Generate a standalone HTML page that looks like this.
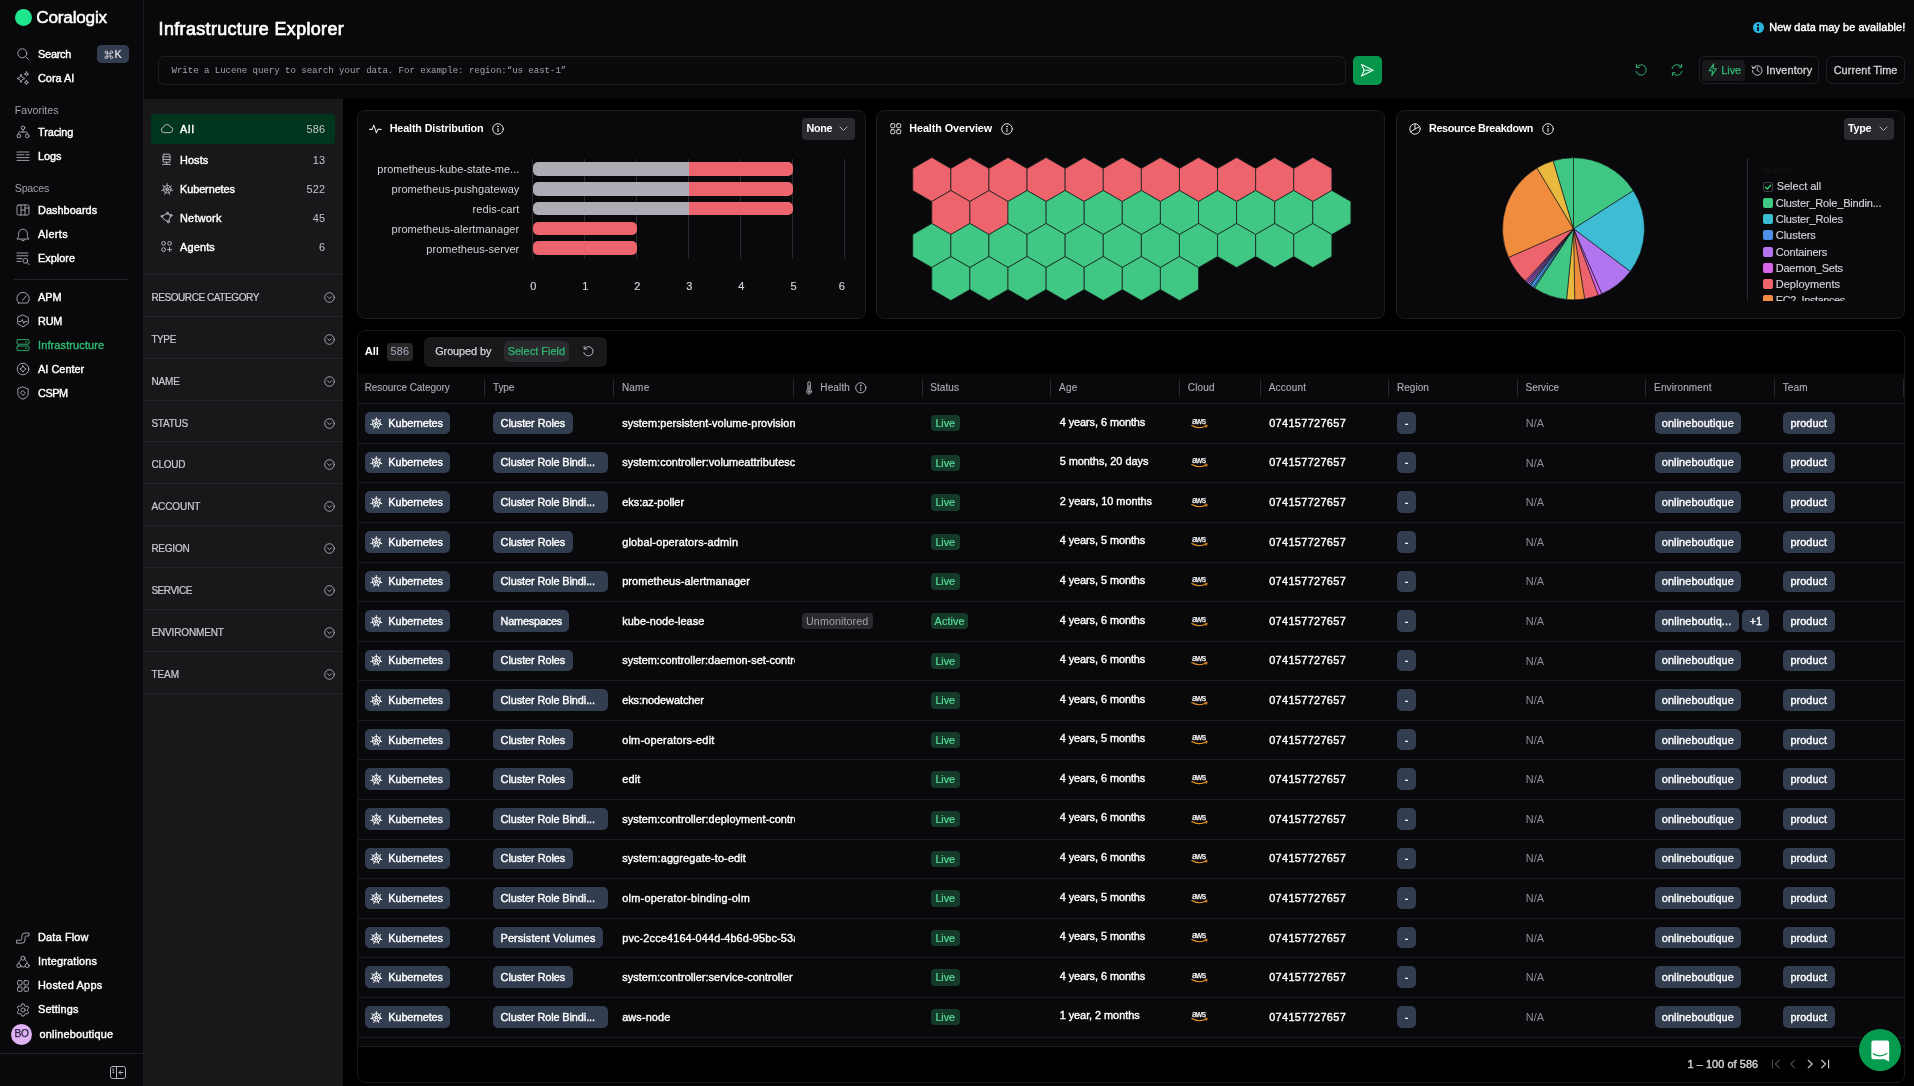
<!DOCTYPE html><html><head><meta charset="utf-8"><title>Infrastructure Explorer</title><style>*{box-sizing:border-box;margin:0;padding:0}
html,body{width:1914px;height:1086px;overflow:hidden;background:#000}
body{font-family:"Liberation Sans",sans-serif;color:#fff;font-size:12px;position:relative}
.a{position:absolute}.n{white-space:nowrap}
svg{display:block;overflow:visible}
#app{position:absolute;left:0;top:0;width:1914px;height:1086px;overflow:hidden;will-change:transform;background:#000}</style></head><body><div id="app">
<div class="a" style="left:144px;top:0px;width:1770px;height:98.8px;background:#09090b;"></div><div class="a n" style="top:15.7px;line-height:26px;font-size:17.9px;letter-spacing:0.37px;color:#fff;left:158.6px;-webkit-text-stroke:0.7px #fff;">Infrastructure Explorer</div><div class="a" style="left:158px;top:55.5px;width:1187.6px;height:29.5px;background:#0a0a0c;border-radius:6px;border:1px solid #1d1d20;"></div><div class="a n" style="top:60.7px;line-height:20px;font-size:9.1px;letter-spacing:-0.05px;color:#a1a1aa;left:171.5px;font-family:'Liberation Mono',monospace;">Write a Lucene query to search your data. For example: region:“us east-1”</div><div class="a" style="left:1352.6px;top:55.9px;width:29.2px;height:28.7px;background:#05964b;border-radius:5px;"></div><svg class="a" viewBox="0 0 14 14" style="left:1360px;top:63.2px;width:14.6px;height:14.6px;stroke:#f0fff6;fill:none;stroke-width:1.05;stroke-linecap:round;stroke-linejoin:round;"><path d="M1.5 1.5L12.5 7L1.5 12.5L4 7Z"/><path d="M4 7H9.5"/></svg><div class="a" style="left:1752.5px;top:22px;width:11px;height:11px;background:#2cb5dc;border-radius:6px;"></div><div class="a" style="left:1757.4px;top:24.3px;width:1.3px;height:1.5px;background:#06222b;"></div><div class="a" style="left:1757.4px;top:26.6px;width:1.3px;height:4.2px;background:#06222b;"></div><div class="a n" style="top:17.4px;line-height:20px;font-size:10.9px;letter-spacing:0.09px;color:#fff;left:1769.2px;-webkit-text-stroke:0.42px #fff;">New data may be available!</div><svg class="a" viewBox="0 0 14 14" style="left:1634px;top:63px;width:14px;height:14px;stroke:#2fb872;fill:none;stroke-width:0.95;stroke-linecap:round;stroke-linejoin:round;"><path d="M2.6 4.2A5.2 5.2 0 1 1 2 8.4"/><path d="M2.4 1.4V4.4H5.4"/></svg><svg class="a" viewBox="0 0 14 14" style="left:1670px;top:63px;width:14px;height:14px;stroke:#2fb872;fill:none;stroke-width:0.95;stroke-linecap:round;stroke-linejoin:round;"><path d="M2 5.6A5.2 5.2 0 0 1 11.4 4"/><path d="M11.6 1.4V4.2H8.8"/><path d="M12 8.4A5.2 5.2 0 0 1 2.6 10"/><path d="M2.4 12.6V9.8H5.2"/></svg><div class="a" style="left:1699px;top:56.3px;width:119.5px;height:27.6px;border-radius:6px;border:1px solid #1f1f23;"></div><div class="a" style="left:1701.7px;top:59.6px;width:43px;height:21.2px;background:#18181b;border-radius:4px;"></div><svg class="a" viewBox="0 0 10 14" style="left:1708px;top:63.4px;width:9.5px;height:13.5px;stroke:#2fb872;fill:none;stroke-width:1.1;stroke-linecap:round;stroke-linejoin:round;"><path d="M6 0.8L1.2 8H4.8L4 13.2L8.8 6H5.2Z"/></svg><div class="a n" style="top:60.1px;line-height:20px;font-size:10.9px;letter-spacing:0px;color:#2fb872;left:1721.2px;-webkit-text-stroke:0.25px #2fb872;">Live</div><svg class="a" viewBox="0 0 14 14" style="left:1750.5px;top:63.8px;width:12.5px;height:12.5px;stroke:#c9c9cf;fill:none;stroke-width:1.1;stroke-linecap:round;stroke-linejoin:round;"><path d="M2.2 4.8A5.4 5.4 0 1 1 1.6 7.4"/><path d="M1 2.4L2.2 5L4.8 4.2"/><path d="M7 4V7.2L9.2 8.6"/></svg><div class="a n" style="top:60.1px;line-height:20px;font-size:10.9px;letter-spacing:0.15px;color:#d4d4d8;left:1766.3px;-webkit-text-stroke:0.3px #d4d4d8;">Inventory</div><div class="a" style="left:1825.8px;top:56.3px;width:79.7px;height:27.6px;border-radius:6px;border:1px solid #1f1f23;"></div><div class="a n" style="top:60.1px;line-height:20px;font-size:10.9px;letter-spacing:0.07px;color:#d4d4d8;left:1833.7px;-webkit-text-stroke:0.3px #d4d4d8;">Current Time</div>
<div class="a" style="left:0px;top:0px;width:143.5px;height:1086px;background:#09090b;"></div><div class="a" style="left:143px;top:0px;width:1px;height:1086px;background:#1a1a1e;"></div><div class="a" style="left:15px;top:9px;width:17px;height:17px;background:#1fe68d;border-radius:9px;"></div><div class="a n" style="top:5.1px;line-height:24px;font-size:17.2px;letter-spacing:-0.22px;color:#fff;left:36.3px;-webkit-text-stroke:0.5px #fff;">Coralogix</div><svg class="a" viewBox="0 0 14 14" style="left:15.5px;top:47px;width:14px;height:14px;stroke:#acacb4;fill:none;stroke-width:0.92;stroke-linecap:round;stroke-linejoin:round;"><circle cx="6.3" cy="6.3" r="4.5"/><path d="M9.6 9.6L12.4 12.4"/></svg><div class="a n" style="top:43.8px;line-height:20px;font-size:10.9px;letter-spacing:-0.22px;color:#fff;left:38px;-webkit-text-stroke:0.4px #fff;">Search</div><div class="a" style="left:97px;top:45px;width:32px;height:18px;background:#323d4f;border-radius:4.5px;"></div><svg class="a" viewBox="0 0 10 10" style="left:103.6px;top:49.8px;width:9.6px;height:9.6px;stroke:#e4e4e7;fill:none;stroke-width:0.8;stroke-linecap:round;stroke-linejoin:round;"><rect x="3.6" y="3.6" width="2.8" height="2.8"/><circle cx="2.3" cy="2.3" r="1.3"/><circle cx="7.7" cy="2.3" r="1.3"/><circle cx="2.3" cy="7.7" r="1.3"/><circle cx="7.7" cy="7.7" r="1.3"/></svg><div class="a n" style="top:43.8px;line-height:20px;font-size:10.8px;letter-spacing:0px;color:#e4e4e7;left:114.4px;-webkit-text-stroke:0.2px #e4e4e7;">K</div><svg class="a" viewBox="0 0 14 14" style="left:15.5px;top:71px;width:14px;height:14px;stroke:#acacb4;fill:none;stroke-width:0.92;stroke-linecap:round;stroke-linejoin:round;"><path d="M5 3.5L6.2 6.3L9 7.5L6.2 8.7L5 11.5L3.8 8.7L1 7.5L3.8 6.3Z"/><path d="M10.5 0.8L11.1 2.4L12.7 3L11.1 3.6L10.5 5.2L9.9 3.6L8.3 3L9.9 2.4Z"/><path d="M10.5 9.3L11.1 10.9L12.7 11.5L11.1 12.1L10.5 13.7L9.9 12.1L8.3 11.5L9.9 10.9Z"/></svg><div class="a n" style="top:67.8px;line-height:20px;font-size:10.9px;letter-spacing:-0.01px;color:#fff;left:38px;-webkit-text-stroke:0.4px #fff;">Cora AI</div><div class="a n" style="top:100.1px;line-height:20px;font-size:10.6px;letter-spacing:0.01px;color:#a1a1aa;left:14.8px;">Favorites</div><svg class="a" viewBox="0 0 14 14" style="left:15.5px;top:125.3px;width:14px;height:14px;stroke:#acacb4;fill:none;stroke-width:0.92;stroke-linecap:round;stroke-linejoin:round;"><circle cx="7" cy="2.8" r="1.8"/><circle cx="2.8" cy="11" r="1.8"/><circle cx="11.2" cy="11" r="1.8"/><path d="M7 4.6V7M2.8 9.2V7.6Q2.8 7 3.4 7H10.6Q11.2 7 11.2 7.6V9.2"/></svg><div class="a n" style="top:122.1px;line-height:20px;font-size:10.9px;letter-spacing:-0.09px;color:#fff;left:38px;-webkit-text-stroke:0.4px #fff;">Tracing</div><svg class="a" viewBox="0 0 14 14" style="left:15.5px;top:149.3px;width:14px;height:14px;stroke:#acacb4;fill:none;stroke-width:0.92;stroke-linecap:round;stroke-linejoin:round;"><path d="M1 3H13M1 5.8H8M10 5.8H13M1 8.6H13M1 11.4H13"/></svg><div class="a n" style="top:146.1px;line-height:20px;font-size:10.9px;letter-spacing:-0.03px;color:#fff;left:38px;-webkit-text-stroke:0.4px #fff;">Logs</div><div class="a n" style="top:178.1px;line-height:20px;font-size:10.6px;letter-spacing:-0.19px;color:#a1a1aa;left:14.8px;">Spaces</div><svg class="a" viewBox="0 0 14 14" style="left:15.5px;top:203.3px;width:14px;height:14px;stroke:#acacb4;fill:none;stroke-width:0.92;stroke-linecap:round;stroke-linejoin:round;"><rect x="1" y="2" width="12" height="10" rx="1.5"/><path d="M5 2V12M9 2V12M5 7H9M9 5H13"/></svg><div class="a n" style="top:200.1px;line-height:20px;font-size:10.9px;letter-spacing:0.05px;color:#fff;left:38px;-webkit-text-stroke:0.4px #fff;">Dashboards</div><svg class="a" viewBox="0 0 14 14" style="left:15.5px;top:227.5px;width:14px;height:14px;stroke:#acacb4;fill:none;stroke-width:0.92;stroke-linecap:round;stroke-linejoin:round;"><path d="M1.2 10.8C2.6 9.6 2.6 8 2.6 5.6A4.4 4.4 0 0 1 11.4 5.6C11.4 8 11.4 9.6 12.8 10.8Z"/><path d="M5.4 12Q7 13.8 8.6 12"/></svg><div class="a n" style="top:224.3px;line-height:20px;font-size:10.9px;letter-spacing:0.36px;color:#fff;left:38px;-webkit-text-stroke:0.4px #fff;">Alerts</div><svg class="a" viewBox="0 0 14 14" style="left:15.5px;top:251.4px;width:14px;height:14px;stroke:#acacb4;fill:none;stroke-width:0.92;stroke-linecap:round;stroke-linejoin:round;"><path d="M1 2H12M1 4.8H12M1 7.6H6M1 10.4H5"/><circle cx="9.3" cy="9.8" r="2.4"/><path d="M11.1 11.6L13.3 13.8"/></svg><div class="a n" style="top:248.2px;line-height:20px;font-size:10.9px;letter-spacing:0.01px;color:#fff;left:38px;-webkit-text-stroke:0.4px #fff;">Explore</div><div class="a" style="left:14px;top:278.7px;width:115px;height:1px;background:#232327;"></div><svg class="a" viewBox="0 0 14 14" style="left:15.5px;top:290.5px;width:14px;height:14px;stroke:#acacb4;fill:none;stroke-width:0.92;stroke-linecap:round;stroke-linejoin:round;"><path d="M2.6 12H11.4A6.2 6.2 0 1 0 2.6 12Z"/><path d="M6.6 9.4L10.2 4.8"/></svg><div class="a n" style="top:287.3px;line-height:20px;font-size:10.9px;letter-spacing:0.03px;color:#fff;left:38px;-webkit-text-stroke:0.4px #fff;">APM</div><svg class="a" viewBox="0 0 14 14" style="left:15.5px;top:314.3px;width:14px;height:14px;stroke:#acacb4;fill:none;stroke-width:0.92;stroke-linecap:round;stroke-linejoin:round;"><path d="M7 1L12.3 3.5V9.5L7 13L1.7 9.5V3.5Z"/><path d="M3 7.5H5.2L6.2 5.5L7.8 9.5L8.8 7.5H11"/></svg><div class="a n" style="top:311.1px;line-height:20px;font-size:10.9px;letter-spacing:-0.21px;color:#fff;left:38px;-webkit-text-stroke:0.4px #fff;">RUM</div><svg class="a" viewBox="0 0 14 14" style="left:15.5px;top:338.2px;width:14px;height:14px;stroke:#2fb872;fill:none;stroke-width:0.92;stroke-linecap:round;stroke-linejoin:round;"><rect x="1" y="1.6" width="12" height="4.6" rx="1"/><rect x="1" y="8" width="12" height="4.6" rx="1"/><path d="M9.5 4H10.8M9.5 10.3H10.8"/></svg><div class="a n" style="top:335px;line-height:20px;font-size:10.9px;letter-spacing:0.15px;color:#2fb872;left:38px;-webkit-text-stroke:0.4px #2fb872;">Infrastructure</div><svg class="a" viewBox="0 0 14 14" style="left:15.5px;top:362.2px;width:14px;height:14px;stroke:#acacb4;fill:none;stroke-width:0.92;stroke-linecap:round;stroke-linejoin:round;"><circle cx="7" cy="7" r="5.8"/><path d="M7 3.8L8.2 5.8L10.2 7L8.2 8.2L7 10.2L5.8 8.2L3.8 7L5.8 5.8Z"/></svg><div class="a n" style="top:359px;line-height:20px;font-size:10.9px;letter-spacing:0.03px;color:#fff;left:38px;-webkit-text-stroke:0.4px #fff;">AI Center</div><svg class="a" viewBox="0 0 14 14" style="left:15.5px;top:386.2px;width:14px;height:14px;stroke:#acacb4;fill:none;stroke-width:0.92;stroke-linecap:round;stroke-linejoin:round;"><path d="M7 1L12.2 3V7.5C12.2 10.4 9.8 12.3 7 13.2C4.2 12.3 1.8 10.4 1.8 7.5V3Z"/><path d="M7 4.6L9.3 7L7 9.4L4.7 7Z"/></svg><div class="a n" style="top:383px;line-height:20px;font-size:10.9px;letter-spacing:-0.45px;color:#fff;left:38px;-webkit-text-stroke:0.4px #fff;">CSPM</div><svg class="a" viewBox="0 0 14 14" style="left:15.5px;top:930.6px;width:14px;height:14px;stroke:#acacb4;fill:none;stroke-width:0.92;stroke-linecap:round;stroke-linejoin:round;"><path d="M1 9.2H4.2Q5.8 9.2 5.8 7.6V5.2Q5.8 2 9 2H13V5H10.4Q9 5 9 6.4V9Q9 12.2 5.8 12.2H1Z"/></svg><div class="a n" style="top:927.4px;line-height:20px;font-size:10.9px;letter-spacing:0.18px;color:#fff;left:38px;-webkit-text-stroke:0.4px #fff;">Data Flow</div><svg class="a" viewBox="0 0 14 14" style="left:15.5px;top:954.5px;width:14px;height:14px;stroke:#acacb4;fill:none;stroke-width:0.92;stroke-linecap:round;stroke-linejoin:round;"><circle cx="7" cy="3.2" r="2"/><circle cx="2.8" cy="10.6" r="2"/><circle cx="11.2" cy="10.6" r="2"/><path d="M5.2 4.4Q2.6 6 2.6 8.6M8.8 4.4Q11.4 6 11.4 8.6M4.8 11.6Q7 12.6 9.2 11.6"/></svg><div class="a n" style="top:951.3px;line-height:20px;font-size:10.9px;letter-spacing:0.19px;color:#fff;left:38px;-webkit-text-stroke:0.4px #fff;">Integrations</div><svg class="a" viewBox="0 0 14 14" style="left:15.5px;top:978.5px;width:14px;height:14px;stroke:#acacb4;fill:none;stroke-width:0.92;stroke-linecap:round;stroke-linejoin:round;"><rect x="1.6" y="1.6" width="4.4" height="4.4" rx="1"/><rect x="8" y="1.6" width="4.4" height="4.4" rx="1"/><rect x="1.6" y="8" width="4.4" height="4.4" rx="1"/><rect x="8" y="8" width="4.4" height="4.4" rx="1"/></svg><div class="a n" style="top:975.3px;line-height:20px;font-size:10.9px;letter-spacing:0.24px;color:#fff;left:38px;-webkit-text-stroke:0.4px #fff;">Hosted Apps</div><svg class="a" viewBox="0 0 14 14" style="left:15.5px;top:1002.6px;width:14px;height:14px;stroke:#acacb4;fill:none;stroke-width:0.92;stroke-linecap:round;stroke-linejoin:round;"><circle cx="7" cy="7" r="2.1"/><path d="M5.9 1H8.1L8.5 2.7L9.9 3.5L11.6 3L12.7 4.9L11.4 6.1V7.9L12.7 9.1L11.6 11L9.9 10.5L8.5 11.3L8.1 13H5.9L5.5 11.3L4.1 10.5L2.4 11L1.3 9.1L2.6 7.9V6.1L1.3 4.9L2.4 3L4.1 3.5L5.5 2.7Z"/></svg><div class="a n" style="top:999.4px;line-height:20px;font-size:10.9px;letter-spacing:0.15px;color:#fff;left:38px;-webkit-text-stroke:0.4px #fff;">Settings</div><div class="a" style="left:10.8px;top:1023.6px;width:21.6px;height:21.6px;background:#dfb2f3;border-radius:11px;"></div><div class="a n" style="top:1024px;line-height:20px;font-size:10.2px;letter-spacing:-0.3px;color:#2b2140;left:-978.4px;width:2000px;text-align:center;-webkit-text-stroke:0.25px #2b2140;">BO</div><div class="a n" style="top:1024.2px;line-height:20px;font-size:10.9px;letter-spacing:0.22px;color:#fff;left:39.4px;-webkit-text-stroke:0.4px #fff;">onlineboutique</div><div class="a" style="left:0px;top:1052.7px;width:143px;height:1px;background:#232327;"></div><svg class="a" viewBox="0 0 16 13" style="left:110px;top:1065.5px;width:16px;height:13px;stroke:#b4b4bb;fill:none;stroke-width:1;stroke-linecap:round;stroke-linejoin:round;"><rect x="0.5" y="0.5" width="15" height="12" rx="2.2"/><path d="M6.5 0.5V12.5M2.8 3H3.8M2.8 4.8H3.8M2.8 6.6H3.8M13 6.5H9.2M10.8 4.7L9 6.5L10.8 8.3"/></svg>
<div class="a" style="left:144px;top:98.8px;width:199px;height:988px;background:#18181b;"></div><div class="a" style="left:151px;top:114.2px;width:184px;height:30.2px;background:#00361d;border-radius:3px;"></div><svg class="a" viewBox="0 0 13 13" style="left:159.8px;top:122.4px;width:13px;height:13px;stroke:#b4b4bc;fill:none;stroke-width:1;stroke-linecap:round;stroke-linejoin:round;"><path d="M3.6 10.6A2.7 2.7 0 0 1 3.4 5.3A3.6 3.6 0 0 1 10.3 4.9A2.9 2.9 0 0 1 10.4 10.6Z"/></svg><div class="a n" style="top:119.2px;line-height:20px;font-size:10.9px;letter-spacing:0.86px;color:#fff;left:180px;-webkit-text-stroke:0.4px #fff;">All</div><div class="a n" style="top:119.2px;line-height:20px;font-size:10.9px;letter-spacing:0.25px;color:#c4c4cc;left:-1674.7px;width:2000px;text-align:right;">586</div><svg class="a" viewBox="0 0 13 13" style="left:159.8px;top:153.2px;width:13px;height:13px;stroke:#b4b4bc;fill:none;stroke-width:1;stroke-linecap:round;stroke-linejoin:round;"><rect x="3" y="1.2" width="7" height="8" rx="1"/><path d="M3 3.8H10M3 6.4H10M6.5 9.2V11M2.6 11.4H10.4"/></svg><div class="a n" style="top:150px;line-height:20px;font-size:10.9px;letter-spacing:0.09px;color:#fff;left:180px;-webkit-text-stroke:0.4px #fff;">Hosts</div><div class="a n" style="top:150px;line-height:20px;font-size:10.9px;letter-spacing:0.25px;color:#c4c4cc;left:-1674.7px;width:2000px;text-align:right;">13</div><svg viewBox="0 0 14 14" style="position:absolute;left:160.6px;top:182.6px;width:12.4px;height:12.4px;stroke:#b4b4bc;fill:none;stroke-width:1.0;stroke-linecap:round"><circle cx="7" cy="7" r="4.3"/><circle cx="7" cy="7" r="1.3"/><path d="M7.00 5.70L7.00 0.60M8.02 6.19L12.00 3.01M8.27 7.29L13.24 8.42M7.56 8.17L9.78 12.77M6.44 8.17L4.22 12.77M5.73 7.29L0.76 8.42M5.98 6.19L2.00 3.01"/></svg><div class="a n" style="top:179px;line-height:20px;font-size:10.9px;letter-spacing:-0.08px;color:#fff;left:180px;-webkit-text-stroke:0.4px #fff;">Kubernetes</div><div class="a n" style="top:179px;line-height:20px;font-size:10.9px;letter-spacing:0.25px;color:#c4c4cc;left:-1674.7px;width:2000px;text-align:right;">522</div><svg class="a" viewBox="0 0 13 13" style="left:159.8px;top:211.2px;width:13px;height:13px;stroke:#b4b4bc;fill:none;stroke-width:1;stroke-linecap:round;stroke-linejoin:round;"><path d="M2 5.2L7.2 2.4L10.8 4.4L8.6 10.4L5 9.2Z"/><circle cx="7.4" cy="2.2" r="1.1"/><circle cx="11" cy="4.4" r="1.1"/><circle cx="8.4" cy="10.8" r="1.1"/><circle cx="1.8" cy="5.2" r="0.9"/></svg><div class="a n" style="top:208px;line-height:20px;font-size:10.9px;letter-spacing:0.25px;color:#fff;left:180px;-webkit-text-stroke:0.4px #fff;">Network</div><div class="a n" style="top:208px;line-height:20px;font-size:10.9px;letter-spacing:0.25px;color:#c4c4cc;left:-1674.7px;width:2000px;text-align:right;">45</div><svg class="a" viewBox="0 0 13 13" style="left:159.8px;top:240.2px;width:13px;height:13px;stroke:#b4b4bc;fill:none;stroke-width:1;stroke-linecap:round;stroke-linejoin:round;"><circle cx="3.6" cy="3.4" r="1.9"/><circle cx="9.6" cy="3.4" r="1.9"/><circle cx="3.6" cy="9.6" r="1.9"/><path d="M9.6 7.6V11.6M7.6 9.6H11.6"/></svg><div class="a n" style="top:237px;line-height:20px;font-size:10.9px;letter-spacing:0.18px;color:#fff;left:180px;-webkit-text-stroke:0.4px #fff;">Agents</div><div class="a n" style="top:237px;line-height:20px;font-size:10.9px;letter-spacing:0.25px;color:#c4c4cc;left:-1674.7px;width:2000px;text-align:right;">6</div><div class="a" style="left:144px;top:274px;width:199px;height:1px;background:#242428;"></div><div class="a n" style="top:287.5px;line-height:20px;font-size:10px;letter-spacing:-0.42px;color:#c9c9d0;left:151.4px;-webkit-text-stroke:0.22px #c9c9d0;">RESOURCE CATEGORY</div><svg class="a" viewBox="0 0 11 11" style="left:323.5px;top:291.5px;width:11px;height:11px;stroke:#a1a1aa;fill:none;stroke-width:1;stroke-linecap:round;stroke-linejoin:round;"><circle cx="5.5" cy="5.5" r="4.8"/><path d="M3.6 4.8L5.5 6.7L7.4 4.8"/></svg><div class="a" style="left:144px;top:316px;width:199px;height:1px;background:#242428;"></div><div class="a n" style="top:329.5px;line-height:20px;font-size:10px;letter-spacing:-0.4px;color:#c9c9d0;left:151.4px;-webkit-text-stroke:0.22px #c9c9d0;">TYPE</div><svg class="a" viewBox="0 0 11 11" style="left:323.5px;top:333.5px;width:11px;height:11px;stroke:#a1a1aa;fill:none;stroke-width:1;stroke-linecap:round;stroke-linejoin:round;"><circle cx="5.5" cy="5.5" r="4.8"/><path d="M3.6 4.8L5.5 6.7L7.4 4.8"/></svg><div class="a" style="left:144px;top:358px;width:199px;height:1px;background:#242428;"></div><div class="a n" style="top:371.5px;line-height:20px;font-size:10px;letter-spacing:-0.12px;color:#c9c9d0;left:151.4px;-webkit-text-stroke:0.22px #c9c9d0;">NAME</div><svg class="a" viewBox="0 0 11 11" style="left:323.5px;top:375.5px;width:11px;height:11px;stroke:#a1a1aa;fill:none;stroke-width:1;stroke-linecap:round;stroke-linejoin:round;"><circle cx="5.5" cy="5.5" r="4.8"/><path d="M3.6 4.8L5.5 6.7L7.4 4.8"/></svg><div class="a" style="left:144px;top:400px;width:199px;height:1px;background:#242428;"></div><div class="a n" style="top:413.5px;line-height:20px;font-size:10px;letter-spacing:-0.23px;color:#c9c9d0;left:151.4px;-webkit-text-stroke:0.22px #c9c9d0;">STATUS</div><svg class="a" viewBox="0 0 11 11" style="left:323.5px;top:417.5px;width:11px;height:11px;stroke:#a1a1aa;fill:none;stroke-width:1;stroke-linecap:round;stroke-linejoin:round;"><circle cx="5.5" cy="5.5" r="4.8"/><path d="M3.6 4.8L5.5 6.7L7.4 4.8"/></svg><div class="a" style="left:144px;top:441px;width:199px;height:1px;background:#242428;"></div><div class="a n" style="top:454.5px;line-height:20px;font-size:10px;letter-spacing:-0.2px;color:#c9c9d0;left:151.4px;-webkit-text-stroke:0.22px #c9c9d0;">CLOUD</div><svg class="a" viewBox="0 0 11 11" style="left:323.5px;top:458.5px;width:11px;height:11px;stroke:#a1a1aa;fill:none;stroke-width:1;stroke-linecap:round;stroke-linejoin:round;"><circle cx="5.5" cy="5.5" r="4.8"/><path d="M3.6 4.8L5.5 6.7L7.4 4.8"/></svg><div class="a" style="left:144px;top:483px;width:199px;height:1px;background:#242428;"></div><div class="a n" style="top:496.5px;line-height:20px;font-size:10px;letter-spacing:-0.06px;color:#c9c9d0;left:151.4px;-webkit-text-stroke:0.22px #c9c9d0;">ACCOUNT</div><svg class="a" viewBox="0 0 11 11" style="left:323.5px;top:500.5px;width:11px;height:11px;stroke:#a1a1aa;fill:none;stroke-width:1;stroke-linecap:round;stroke-linejoin:round;"><circle cx="5.5" cy="5.5" r="4.8"/><path d="M3.6 4.8L5.5 6.7L7.4 4.8"/></svg><div class="a" style="left:144px;top:525px;width:199px;height:1px;background:#242428;"></div><div class="a n" style="top:538.5px;line-height:20px;font-size:10px;letter-spacing:-0.24px;color:#c9c9d0;left:151.4px;-webkit-text-stroke:0.22px #c9c9d0;">REGION</div><svg class="a" viewBox="0 0 11 11" style="left:323.5px;top:542.5px;width:11px;height:11px;stroke:#a1a1aa;fill:none;stroke-width:1;stroke-linecap:round;stroke-linejoin:round;"><circle cx="5.5" cy="5.5" r="4.8"/><path d="M3.6 4.8L5.5 6.7L7.4 4.8"/></svg><div class="a" style="left:144px;top:567px;width:199px;height:1px;background:#242428;"></div><div class="a n" style="top:580.5px;line-height:20px;font-size:10px;letter-spacing:-0.46px;color:#c9c9d0;left:151.4px;-webkit-text-stroke:0.22px #c9c9d0;">SERVICE</div><svg class="a" viewBox="0 0 11 11" style="left:323.5px;top:584.5px;width:11px;height:11px;stroke:#a1a1aa;fill:none;stroke-width:1;stroke-linecap:round;stroke-linejoin:round;"><circle cx="5.5" cy="5.5" r="4.8"/><path d="M3.6 4.8L5.5 6.7L7.4 4.8"/></svg><div class="a" style="left:144px;top:609px;width:199px;height:1px;background:#242428;"></div><div class="a n" style="top:622.5px;line-height:20px;font-size:10px;letter-spacing:-0.13px;color:#c9c9d0;left:151.4px;-webkit-text-stroke:0.22px #c9c9d0;">ENVIRONMENT</div><svg class="a" viewBox="0 0 11 11" style="left:323.5px;top:626.5px;width:11px;height:11px;stroke:#a1a1aa;fill:none;stroke-width:1;stroke-linecap:round;stroke-linejoin:round;"><circle cx="5.5" cy="5.5" r="4.8"/><path d="M3.6 4.8L5.5 6.7L7.4 4.8"/></svg><div class="a" style="left:144px;top:651px;width:199px;height:1px;background:#242428;"></div><div class="a n" style="top:664.5px;line-height:20px;font-size:10px;letter-spacing:-0.07px;color:#c9c9d0;left:151.4px;-webkit-text-stroke:0.22px #c9c9d0;">TEAM</div><svg class="a" viewBox="0 0 11 11" style="left:323.5px;top:668.5px;width:11px;height:11px;stroke:#a1a1aa;fill:none;stroke-width:1;stroke-linecap:round;stroke-linejoin:round;"><circle cx="5.5" cy="5.5" r="4.8"/><path d="M3.6 4.8L5.5 6.7L7.4 4.8"/></svg><div class="a" style="left:144px;top:693px;width:199px;height:1px;background:#242428;"></div>
<div class="a" style="left:357px;top:110px;width:509.3px;height:209px;background:#09090b;border-radius:8px;border:1px solid #1d1d21;"></div><div class="a" style="left:876.2px;top:110px;width:509.3px;height:209px;background:#09090b;border-radius:8px;border:1px solid #1d1d21;"></div><div class="a" style="left:1396px;top:110px;width:509.3px;height:209px;background:#09090b;border-radius:8px;border:1px solid #1d1d21;"></div><svg class="a" viewBox="0 0 13 10" style="left:369.3px;top:123.6px;width:12.6px;height:10px;stroke:#e4e4e7;fill:none;stroke-width:1.1;stroke-linecap:round;stroke-linejoin:round;"><path d="M0.6 5.4H3.2L5 1L7.6 9L9.2 5.4H12.4"/></svg><div class="a n" style="top:118.4px;line-height:20px;font-size:10.8px;letter-spacing:-0.15px;color:#fff;left:389.7px;font-weight:700;">Health Distribution</div><svg class="a" viewBox="0 0 12 12" style="left:492.2px;top:122.8px;width:12px;height:12px;stroke:#e4e4e7;fill:none;stroke-width:1;stroke-linecap:round;stroke-linejoin:round;"><circle cx="6" cy="6" r="5.3"/><path d="M6 5.4V8.8"/><circle cx="6" cy="3.4" r="0.4" fill="#e4e4e7"/></svg><div class="a" style="left:802px;top:118px;width:52.5px;height:21.6px;background:#2b2b2f;border-radius:4px;"></div><div class="a n" style="top:118px;line-height:20px;font-size:10.8px;letter-spacing:-0.35px;color:#fff;left:806.6px;font-weight:700;">None</div><svg class="a" viewBox="0 0 10 6" style="left:839px;top:126.1px;width:9px;height:5.4px;stroke:#b4b4bb;fill:none;stroke-width:1.1;stroke-linecap:round;stroke-linejoin:round;"><path d="M1 1L5 5L9 1"/></svg><div class="a" style="left:532px;top:159px;width:1px;height:99.6px;background:#2a2a2e;"></div><div class="a" style="left:584.05px;top:159px;width:1px;height:99.6px;background:#2a2a2e;"></div><div class="a" style="left:636.1px;top:159px;width:1px;height:99.6px;background:#2a2a2e;"></div><div class="a" style="left:688.15px;top:159px;width:1px;height:99.6px;background:#2a2a2e;"></div><div class="a" style="left:740.2px;top:159px;width:1px;height:99.6px;background:#2a2a2e;"></div><div class="a" style="left:792.25px;top:159px;width:1px;height:99.6px;background:#2a2a2e;"></div><div class="a" style="left:844.3px;top:159px;width:1px;height:99.6px;background:#2a2a2e;"></div><div class="a n" style="top:159.4px;line-height:20px;font-size:11px;letter-spacing:0.03px;color:#d4d4d8;left:377.3px;">prometheus-kube-state-me...</div><div class="a" style="left:533px;top:162.2px;width:259.85px;height:13.6px;border-radius:5px;background:linear-gradient(90deg,#adabb3 0,#adabb3 155.55px,#ee646c 155.55px)"></div><div class="a n" style="top:179.2px;line-height:20px;font-size:11px;letter-spacing:0.06px;color:#d4d4d8;left:391.5px;">prometheus-pushgateway</div><div class="a" style="left:533px;top:182px;width:259.85px;height:13.6px;border-radius:5px;background:linear-gradient(90deg,#adabb3 0,#adabb3 155.55px,#ee646c 155.55px)"></div><div class="a n" style="top:199px;line-height:20px;font-size:11px;letter-spacing:0.09px;color:#d4d4d8;left:472.6px;">redis-cart</div><div class="a" style="left:533px;top:201.8px;width:259.85px;height:13.6px;border-radius:5px;background:linear-gradient(90deg,#adabb3 0,#adabb3 155.55px,#ee646c 155.55px)"></div><div class="a n" style="top:218.8px;line-height:20px;font-size:11px;letter-spacing:0.05px;color:#d4d4d8;left:391.5px;">prometheus-alertmanager</div><div class="a" style="left:533px;top:221.6px;width:103.7px;height:13.6px;background:#ee646c;border-radius:5px;"></div><div class="a n" style="top:238.6px;line-height:20px;font-size:11px;letter-spacing:0.04px;color:#d4d4d8;left:426.3px;">prometheus-server</div><div class="a" style="left:533px;top:241.4px;width:103.7px;height:13.6px;background:#ee646c;border-radius:5px;"></div><div class="a n" style="top:276.1px;line-height:20px;font-size:11px;letter-spacing:0px;color:#d4d4d8;left:-466.8px;width:2000px;text-align:center;-webkit-text-stroke:0.15px #d4d4d8;">0</div><div class="a n" style="top:276.1px;line-height:20px;font-size:11px;letter-spacing:0px;color:#d4d4d8;left:-414.75px;width:2000px;text-align:center;-webkit-text-stroke:0.15px #d4d4d8;">1</div><div class="a n" style="top:276.1px;line-height:20px;font-size:11px;letter-spacing:0px;color:#d4d4d8;left:-362.7px;width:2000px;text-align:center;-webkit-text-stroke:0.15px #d4d4d8;">2</div><div class="a n" style="top:276.1px;line-height:20px;font-size:11px;letter-spacing:0px;color:#d4d4d8;left:-310.65px;width:2000px;text-align:center;-webkit-text-stroke:0.15px #d4d4d8;">3</div><div class="a n" style="top:276.1px;line-height:20px;font-size:11px;letter-spacing:0px;color:#d4d4d8;left:-258.6px;width:2000px;text-align:center;-webkit-text-stroke:0.15px #d4d4d8;">4</div><div class="a n" style="top:276.1px;line-height:20px;font-size:11px;letter-spacing:0px;color:#d4d4d8;left:-206.55px;width:2000px;text-align:center;-webkit-text-stroke:0.15px #d4d4d8;">5</div><div class="a n" style="top:276.1px;line-height:20px;font-size:11px;letter-spacing:0px;color:#d4d4d8;left:-158.3px;width:2000px;text-align:center;-webkit-text-stroke:0.15px #d4d4d8;">6</div><svg class="a" viewBox="0 0 12 12" style="left:889.6px;top:123px;width:11.5px;height:11.5px;stroke:#e4e4e7;fill:none;stroke-width:1;stroke-linecap:round;stroke-linejoin:round;"><rect x="0.8" y="0.8" width="4.2" height="4.2" rx="0.9"/><rect x="7" y="0.8" width="4.2" height="4.2" rx="0.9"/><rect x="0.8" y="7" width="4.2" height="4.2" rx="0.9"/><rect x="7" y="7" width="4.2" height="4.2" rx="0.9"/></svg><div class="a n" style="top:118.4px;line-height:20px;font-size:10.8px;letter-spacing:-0.08px;color:#fff;left:909.3px;font-weight:700;">Health Overview</div><svg class="a" viewBox="0 0 12 12" style="left:1001.2px;top:122.8px;width:12px;height:12px;stroke:#e4e4e7;fill:none;stroke-width:1;stroke-linecap:round;stroke-linejoin:round;"><circle cx="6" cy="6" r="5.3"/><path d="M6 5.4V8.8"/><circle cx="6" cy="3.4" r="0.4" fill="#e4e4e7"/></svg><svg class="a" style="left:876px;top:110px;width:509px;height:209px;stroke:#1a211f;stroke-width:0.75" viewBox="0 0 509 209"><polygon points="55.80,47.50 74.85,58.50 74.85,80.50 55.80,91.50 36.75,80.50 36.75,58.50" fill="#ee646c"/><polygon points="93.90,47.50 112.95,58.50 112.95,80.50 93.90,91.50 74.85,80.50 74.85,58.50" fill="#ee646c"/><polygon points="132.00,47.50 151.05,58.50 151.05,80.50 132.00,91.50 112.95,80.50 112.95,58.50" fill="#ee646c"/><polygon points="170.10,47.50 189.15,58.50 189.15,80.50 170.10,91.50 151.05,80.50 151.05,58.50" fill="#ee646c"/><polygon points="208.20,47.50 227.25,58.50 227.25,80.50 208.20,91.50 189.15,80.50 189.15,58.50" fill="#ee646c"/><polygon points="246.30,47.50 265.35,58.50 265.35,80.50 246.30,91.50 227.25,80.50 227.25,58.50" fill="#ee646c"/><polygon points="284.40,47.50 303.45,58.50 303.45,80.50 284.40,91.50 265.35,80.50 265.35,58.50" fill="#ee646c"/><polygon points="322.50,47.50 341.55,58.50 341.55,80.50 322.50,91.50 303.45,80.50 303.45,58.50" fill="#ee646c"/><polygon points="360.60,47.50 379.65,58.50 379.65,80.50 360.60,91.50 341.55,80.50 341.55,58.50" fill="#ee646c"/><polygon points="398.70,47.50 417.75,58.50 417.75,80.50 398.70,91.50 379.65,80.50 379.65,58.50" fill="#ee646c"/><polygon points="436.80,47.50 455.85,58.50 455.85,80.50 436.80,91.50 417.75,80.50 417.75,58.50" fill="#ee646c"/><polygon points="74.85,80.50 93.90,91.50 93.90,113.50 74.85,124.50 55.80,113.50 55.80,91.50" fill="#ee646c"/><polygon points="112.95,80.50 132.00,91.50 132.00,113.50 112.95,124.50 93.90,113.50 93.90,91.50" fill="#ee646c"/><polygon points="151.05,80.50 170.10,91.50 170.10,113.50 151.05,124.50 132.00,113.50 132.00,91.50" fill="#40c783"/><polygon points="189.15,80.50 208.20,91.50 208.20,113.50 189.15,124.50 170.10,113.50 170.10,91.50" fill="#40c783"/><polygon points="227.25,80.50 246.30,91.50 246.30,113.50 227.25,124.50 208.20,113.50 208.20,91.50" fill="#40c783"/><polygon points="265.35,80.50 284.40,91.50 284.40,113.50 265.35,124.50 246.30,113.50 246.30,91.50" fill="#40c783"/><polygon points="303.45,80.50 322.50,91.50 322.50,113.50 303.45,124.50 284.40,113.50 284.40,91.50" fill="#40c783"/><polygon points="341.55,80.50 360.60,91.50 360.60,113.50 341.55,124.50 322.50,113.50 322.50,91.50" fill="#40c783"/><polygon points="379.65,80.50 398.70,91.50 398.70,113.50 379.65,124.50 360.60,113.50 360.60,91.50" fill="#40c783"/><polygon points="417.75,80.50 436.80,91.50 436.80,113.50 417.75,124.50 398.70,113.50 398.70,91.50" fill="#40c783"/><polygon points="455.85,80.50 474.90,91.50 474.90,113.50 455.85,124.50 436.80,113.50 436.80,91.50" fill="#40c783"/><polygon points="55.80,113.50 74.85,124.50 74.85,146.50 55.80,157.50 36.75,146.50 36.75,124.50" fill="#40c783"/><polygon points="93.90,113.50 112.95,124.50 112.95,146.50 93.90,157.50 74.85,146.50 74.85,124.50" fill="#40c783"/><polygon points="132.00,113.50 151.05,124.50 151.05,146.50 132.00,157.50 112.95,146.50 112.95,124.50" fill="#40c783"/><polygon points="170.10,113.50 189.15,124.50 189.15,146.50 170.10,157.50 151.05,146.50 151.05,124.50" fill="#40c783"/><polygon points="208.20,113.50 227.25,124.50 227.25,146.50 208.20,157.50 189.15,146.50 189.15,124.50" fill="#40c783"/><polygon points="246.30,113.50 265.35,124.50 265.35,146.50 246.30,157.50 227.25,146.50 227.25,124.50" fill="#40c783"/><polygon points="284.40,113.50 303.45,124.50 303.45,146.50 284.40,157.50 265.35,146.50 265.35,124.50" fill="#40c783"/><polygon points="322.50,113.50 341.55,124.50 341.55,146.50 322.50,157.50 303.45,146.50 303.45,124.50" fill="#40c783"/><polygon points="360.60,113.50 379.65,124.50 379.65,146.50 360.60,157.50 341.55,146.50 341.55,124.50" fill="#40c783"/><polygon points="398.70,113.50 417.75,124.50 417.75,146.50 398.70,157.50 379.65,146.50 379.65,124.50" fill="#40c783"/><polygon points="436.80,113.50 455.85,124.50 455.85,146.50 436.80,157.50 417.75,146.50 417.75,124.50" fill="#40c783"/><polygon points="74.85,146.50 93.90,157.50 93.90,179.50 74.85,190.50 55.80,179.50 55.80,157.50" fill="#40c783"/><polygon points="112.95,146.50 132.00,157.50 132.00,179.50 112.95,190.50 93.90,179.50 93.90,157.50" fill="#40c783"/><polygon points="151.05,146.50 170.10,157.50 170.10,179.50 151.05,190.50 132.00,179.50 132.00,157.50" fill="#40c783"/><polygon points="189.15,146.50 208.20,157.50 208.20,179.50 189.15,190.50 170.10,179.50 170.10,157.50" fill="#40c783"/><polygon points="227.25,146.50 246.30,157.50 246.30,179.50 227.25,190.50 208.20,179.50 208.20,157.50" fill="#40c783"/><polygon points="265.35,146.50 284.40,157.50 284.40,179.50 265.35,190.50 246.30,179.50 246.30,157.50" fill="#40c783"/><polygon points="303.45,146.50 322.50,157.50 322.50,179.50 303.45,190.50 284.40,179.50 284.40,157.50" fill="#40c783"/></svg><svg class="a" viewBox="0 0 12 12" style="left:1408.6px;top:122.6px;width:12px;height:12px;stroke:#e4e4e7;fill:none;stroke-width:1;stroke-linecap:round;stroke-linejoin:round;"><circle cx="6" cy="6" r="5.2"/><path d="M6 6V0.8M6 6L10.6 3.6M6 6L1.6 8.8"/></svg><div class="a n" style="top:118.4px;line-height:20px;font-size:10.8px;letter-spacing:-0.35px;color:#fff;left:1429px;font-weight:700;">Resource Breakdown</div><svg class="a" viewBox="0 0 12 12" style="left:1541.7px;top:122.8px;width:12px;height:12px;stroke:#e4e4e7;fill:none;stroke-width:1;stroke-linecap:round;stroke-linejoin:round;"><circle cx="6" cy="6" r="5.3"/><path d="M6 5.4V8.8"/><circle cx="6" cy="3.4" r="0.4" fill="#e4e4e7"/></svg><div class="a" style="left:1843.8px;top:118px;width:50px;height:21.6px;background:#2b2b2f;border-radius:4px;"></div><div class="a n" style="top:118px;line-height:20px;font-size:10.8px;letter-spacing:-0.3px;color:#fff;left:1848px;font-weight:700;">Type</div><svg class="a" viewBox="0 0 10 6" style="left:1878.7px;top:126.1px;width:9px;height:5.4px;stroke:#b4b4bb;fill:none;stroke-width:1.1;stroke-linecap:round;stroke-linejoin:round;"><path d="M1 1L5 5L9 1"/></svg><svg class="a" style="left:1396px;top:110px;width:509px;height:209px;stroke:#15151b;stroke-width:0.6;stroke-linejoin:round" viewBox="0 0 509 209"><path d="M177.50 118.80L177.50 47.80A71 71 0 0 1 237.38 80.65Z" fill="#40c783"/><path d="M177.50 118.80L237.38 80.65A71 71 0 0 1 234.20 161.53Z" fill="#3dbcd4"/><path d="M177.50 118.80L234.20 161.53A71 71 0 0 1 205.70 183.96Z" fill="#b175ef"/><path d="M177.50 118.80L205.70 183.96A71 71 0 0 1 202.25 185.35Z" fill="#d966e8"/><path d="M177.50 118.80L202.25 185.35A71 71 0 0 1 188.61 188.93Z" fill="#ee646c"/><path d="M177.50 118.80L188.61 188.93A71 71 0 0 1 178.74 189.79Z" fill="#f08c3e"/><path d="M177.50 118.80L178.74 189.79A71 71 0 0 1 170.57 189.46Z" fill="#e8b83f"/><path d="M177.50 118.80L170.57 189.46A71 71 0 0 1 138.52 178.14Z" fill="#40c783"/><path d="M177.50 118.80L138.52 178.14A71 71 0 0 1 137.18 177.24Z" fill="#3dbcd4"/><path d="M177.50 118.80L137.18 177.24A71 71 0 0 1 134.57 175.35Z" fill="#4a90e8"/><path d="M177.50 118.80L134.57 175.35A71 71 0 0 1 133.59 174.60Z" fill="#3dbcd4"/><path d="M177.50 118.80L133.59 174.60A71 71 0 0 1 132.43 173.66Z" fill="#b175ef"/><path d="M177.50 118.80L132.43 173.66A71 71 0 0 1 131.30 172.71Z" fill="#d966e8"/><path d="M177.50 118.80L131.30 172.71A71 71 0 0 1 130.36 171.89Z" fill="#b175ef"/><path d="M177.50 118.80L130.36 171.89A71 71 0 0 1 129.35 170.98Z" fill="#d966e8"/><path d="M177.50 118.80L129.35 170.98A71 71 0 0 1 112.54 147.45Z" fill="#ee646c"/><path d="M177.50 118.80L112.54 147.45A71 71 0 0 1 140.93 57.94Z" fill="#f08c3e"/><path d="M177.50 118.80L140.93 57.94A71 71 0 0 1 157.22 50.76Z" fill="#e8b83f"/><path d="M177.50 118.80L157.22 50.76A71 71 0 0 1 177.50 47.80Z" fill="#40c783"/></svg><div class="a" style="left:1746.8px;top:158px;width:1px;height:142.6px;background:#2a2a2e;"></div><div class="a" style="left:1763px;top:158px;width:138px;height:142.6px;overflow:hidden"><div class="a n" style="top:2px;line-height:20px;font-size:10.8px;letter-spacing:-0.2px;color:#151518;left:0.3px;-webkit-text-stroke:0.1px #151518;">Name</div><div class="a" style="left:0px;top:23.7px;width:10px;height:10px;border-radius:2px;border:1px solid #3f3f46;"></div><svg class="a" viewBox="0 0 10 10" style="left:0px;top:23.7px;width:10px;height:10px;stroke:#34d27d;fill:none;stroke-width:1.3;stroke-linecap:round;stroke-linejoin:round;"><path d="M2.4 5.2L4.3 7L7.7 3.2"/></svg><div class="a n" style="top:18.4px;line-height:20px;font-size:11px;letter-spacing:-0.01px;color:#d4d4d8;left:13.7px;-webkit-text-stroke:0.15px #d4d4d8;">Select all</div><div class="a" style="left:0px;top:40px;width:10px;height:10px;background:#40c783;border-radius:2px;"></div><div class="a n" style="top:34.9px;line-height:20px;font-size:11px;letter-spacing:-0.18px;color:#d4d4d8;left:12.8px;-webkit-text-stroke:0.15px #d4d4d8;">Cluster_Role_Bindin...</div><div class="a" style="left:0px;top:56.2px;width:10px;height:10px;background:#3dbcd4;border-radius:2px;"></div><div class="a n" style="top:51.1px;line-height:20px;font-size:11px;letter-spacing:-0.16px;color:#d4d4d8;left:12.8px;-webkit-text-stroke:0.15px #d4d4d8;">Cluster_Roles</div><div class="a" style="left:0px;top:72.4px;width:10px;height:10px;background:#4a90e8;border-radius:2px;"></div><div class="a n" style="top:67.3px;line-height:20px;font-size:11px;letter-spacing:-0.04px;color:#d4d4d8;left:12.8px;-webkit-text-stroke:0.15px #d4d4d8;">Clusters</div><div class="a" style="left:0px;top:88.6px;width:10px;height:10px;background:#b175ef;border-radius:2px;"></div><div class="a n" style="top:83.5px;line-height:20px;font-size:11px;letter-spacing:-0.19px;color:#d4d4d8;left:12.8px;-webkit-text-stroke:0.15px #d4d4d8;">Containers</div><div class="a" style="left:0px;top:104.8px;width:10px;height:10px;background:#d966e8;border-radius:2px;"></div><div class="a n" style="top:99.7px;line-height:20px;font-size:11px;letter-spacing:-0.25px;color:#d4d4d8;left:12.8px;-webkit-text-stroke:0.15px #d4d4d8;">Daemon_Sets</div><div class="a" style="left:0px;top:121px;width:10px;height:10px;background:#ee646c;border-radius:2px;"></div><div class="a n" style="top:115.9px;line-height:20px;font-size:11px;letter-spacing:0px;color:#d4d4d8;left:12.8px;-webkit-text-stroke:0.15px #d4d4d8;">Deployments</div><div class="a" style="left:0px;top:137.2px;width:10px;height:10px;background:#f08c3e;border-radius:2px;"></div><div class="a n" style="top:132.1px;line-height:20px;font-size:11px;letter-spacing:-0.43px;color:#d4d4d8;left:12.8px;-webkit-text-stroke:0.15px #d4d4d8;">EC2_Instances</div></div>
<div class="a" style="left:357px;top:330px;width:1548px;height:752.8px;background:#000;border-radius:8px;border:1px solid #19191c;"></div><div class="a n" style="top:341.2px;line-height:20px;font-size:11.2px;letter-spacing:-0.07px;color:#fff;left:364.7px;font-weight:700;">All</div><div class="a" style="left:386.7px;top:342.5px;width:26.4px;height:18px;background:#27272a;border-radius:4px;"></div><div class="a n" style="top:341.4px;line-height:20px;font-size:10.9px;letter-spacing:0.2px;color:#a6abbb;left:-600.1px;width:2000px;text-align:center;">586</div><div class="a" style="left:424.2px;top:337px;width:183px;height:29.7px;background:#18181b;border-radius:6px;"></div><div class="a n" style="top:341.4px;line-height:20px;font-size:10.9px;letter-spacing:-0.08px;color:#d4d4d8;left:435.2px;-webkit-text-stroke:0.25px #d4d4d8;">Grouped by</div><div class="a" style="left:503.8px;top:341.2px;width:65.4px;height:21.3px;background:#2a2a2e;border-radius:5px;"></div><div class="a n" style="top:341.4px;line-height:20px;font-size:10.9px;letter-spacing:0.05px;color:#2fb872;left:507.7px;-webkit-text-stroke:0.25px #2fb872;">Select Field</div><svg class="a" viewBox="0 0 14 14" style="left:582px;top:345.3px;width:12.6px;height:12.6px;stroke:#b4b4bb;fill:none;stroke-width:1.1;stroke-linecap:round;stroke-linejoin:round;"><path d="M2.6 4.2A5.2 5.2 0 1 1 2 8.4"/><path d="M2.4 1.4V4.4H5.4"/></svg><div class="a" style="left:358px;top:373.3px;width:1546px;height:30px;background:#09090b;"></div><div class="a" style="left:358px;top:403.2px;width:1546px;height:1px;background:#1c1c20;"></div><div class="a n" style="top:377.6px;line-height:20px;font-size:10px;letter-spacing:-0.07px;color:#a9a9b2;left:364.7px;-webkit-text-stroke:0.15px #a9a9b2;">Resource Category</div><div class="a n" style="top:377.6px;line-height:20px;font-size:10px;letter-spacing:-0.05px;color:#a9a9b2;left:492.9px;-webkit-text-stroke:0.15px #a9a9b2;">Type</div><div class="a n" style="top:377.6px;line-height:20px;font-size:10px;letter-spacing:0.21px;color:#a9a9b2;left:621.9px;-webkit-text-stroke:0.15px #a9a9b2;">Name</div><svg class="a" viewBox="0 0 6 14" style="left:806.1px;top:380.7px;width:6.2px;height:14.4px;stroke:#b4b4bb;fill:none;stroke-width:0.9;stroke-linecap:round;stroke-linejoin:round;"><path d="M1.8 8.2V1.8A1.2 1.2 0 0 1 4.2 1.8V8.2A2.4 2.4 0 1 1 1.8 8.2Z"/><path d="M3 4.5V10"/><circle cx="3" cy="10.4" r="0.9"/></svg><svg class="a" viewBox="0 0 12 12" style="left:855.2px;top:382px;width:11.6px;height:11.6px;stroke:#b4b4bb;fill:none;stroke-width:1;stroke-linecap:round;stroke-linejoin:round;"><circle cx="6" cy="6" r="5.3"/><path d="M6 5.4V8.8"/><circle cx="6" cy="3.4" r="0.4" fill="#b4b4bb"/></svg><div class="a n" style="top:377.6px;line-height:20px;font-size:10px;letter-spacing:0.13px;color:#a9a9b2;left:820.3px;-webkit-text-stroke:0.15px #a9a9b2;">Health</div><div class="a n" style="top:377.6px;line-height:20px;font-size:10px;letter-spacing:0.06px;color:#a9a9b2;left:930.3px;-webkit-text-stroke:0.15px #a9a9b2;">Status</div><div class="a n" style="top:377.6px;line-height:20px;font-size:10px;letter-spacing:0.17px;color:#a9a9b2;left:1059.1px;-webkit-text-stroke:0.15px #a9a9b2;">Age</div><div class="a n" style="top:377.6px;line-height:20px;font-size:10px;letter-spacing:0.17px;color:#a9a9b2;left:1187.8px;-webkit-text-stroke:0.15px #a9a9b2;">Cloud</div><div class="a n" style="top:377.6px;line-height:20px;font-size:10px;letter-spacing:0.2px;color:#a9a9b2;left:1268.7px;-webkit-text-stroke:0.15px #a9a9b2;">Account</div><div class="a n" style="top:377.6px;line-height:20px;font-size:10px;letter-spacing:0.05px;color:#a9a9b2;left:1396.9px;-webkit-text-stroke:0.15px #a9a9b2;">Region</div><div class="a n" style="top:377.6px;line-height:20px;font-size:10px;letter-spacing:0.02px;color:#a9a9b2;left:1525.5px;-webkit-text-stroke:0.15px #a9a9b2;">Service</div><div class="a n" style="top:377.6px;line-height:20px;font-size:10px;letter-spacing:0.12px;color:#a9a9b2;left:1654.1px;-webkit-text-stroke:0.15px #a9a9b2;">Environment</div><div class="a n" style="top:377.6px;line-height:20px;font-size:10px;letter-spacing:0.14px;color:#a9a9b2;left:1782.7px;-webkit-text-stroke:0.15px #a9a9b2;">Team</div><div class="a" style="left:484.1px;top:379.3px;width:1px;height:17.6px;background:#2a2a2e;"></div><div class="a" style="left:613.1px;top:379.3px;width:1px;height:17.6px;background:#2a2a2e;"></div><div class="a" style="left:792.8px;top:379.3px;width:1px;height:17.6px;background:#2a2a2e;"></div><div class="a" style="left:921.5px;top:379.3px;width:1px;height:17.6px;background:#2a2a2e;"></div><div class="a" style="left:1050.3px;top:379.3px;width:1px;height:17.6px;background:#2a2a2e;"></div><div class="a" style="left:1179px;top:379.3px;width:1px;height:17.6px;background:#2a2a2e;"></div><div class="a" style="left:1259.9px;top:379.3px;width:1px;height:17.6px;background:#2a2a2e;"></div><div class="a" style="left:1388.1px;top:379.3px;width:1px;height:17.6px;background:#2a2a2e;"></div><div class="a" style="left:1516.7px;top:379.3px;width:1px;height:17.6px;background:#2a2a2e;"></div><div class="a" style="left:1645.3px;top:379.3px;width:1px;height:17.6px;background:#2a2a2e;"></div><div class="a" style="left:1773.9px;top:379.3px;width:1px;height:17.6px;background:#2a2a2e;"></div><div class="a" style="left:1902.5px;top:379.3px;width:1px;height:17.6px;background:#2a2a2e;"></div><div class="a" style="left:358px;top:403.7px;width:1546px;height:642.6px;background:#09090b;"></div><div class="a" style="left:358px;top:442.8px;width:1546px;height:1px;background:#1b1b1f;"></div><div class="a" style="left:364.6px;top:412.2px;width:85.8px;height:21.6px;background:#323d4f;border-radius:5px;"></div><svg viewBox="0 0 14 14" style="position:absolute;left:369.8px;top:416.9px;width:12.6px;height:12.6px;stroke:#fff;fill:none;stroke-width:1.05;stroke-linecap:round"><circle cx="7" cy="7" r="4.3"/><circle cx="7" cy="7" r="1.3"/><path d="M7.00 5.70L7.00 0.60M8.02 6.19L12.00 3.01M8.27 7.29L13.24 8.42M7.56 8.17L9.78 12.77M6.44 8.17L4.22 12.77M5.73 7.29L0.76 8.42M5.98 6.19L2.00 3.01"/></svg><div class="a n" style="top:412.9px;line-height:20px;font-size:10.9px;letter-spacing:-0.11px;color:#fff;left:388.3px;-webkit-text-stroke:0.38px #fff;">Kubernetes</div><div class="a" style="left:493.4px;top:412.2px;width:79.2px;height:21.6px;background:#323d4f;border-radius:5px;"></div><div class="a n" style="top:412.9px;line-height:20px;font-size:10.9px;letter-spacing:-0.06px;color:#fff;left:500.6px;-webkit-text-stroke:0.38px #fff;">Cluster Roles</div><div class="a n" style="top:412.9px;line-height:20px;font-size:10.9px;letter-spacing:0.08px;color:#fff;left:622.2px;width:172.6px;overflow:hidden;-webkit-text-stroke:0.38px #fff;">system:persistent-volume-provisioner</div><div class="a" style="left:930.8px;top:415.1px;width:28.8px;height:16.4px;background:#163a29;border-radius:4px;"></div><div class="a n" style="top:413.1px;line-height:20px;font-size:10.8px;letter-spacing:-0.08px;color:#55dc98;left:935.4px;-webkit-text-stroke:0.2px #55dc98;">Live</div><div class="a n" style="top:411.6px;line-height:20px;font-size:10.9px;letter-spacing:-0.06px;color:#fff;left:1059.7px;-webkit-text-stroke:0.38px #fff;">4 years, 6 months</div><svg viewBox="0 0 17 11" style="position:absolute;left:1190.6px;top:417.7px;width:17px;height:11px"><text x="0.9" y="6" font-family="Liberation Sans" font-weight="400" font-size="8.6" fill="#f4f4f5" stroke="#f4f4f5" stroke-width="0.25" letter-spacing="-0.55">aws</text><path d="M0.8 7.6Q8 11.6 15.2 8" stroke="#f59a23" stroke-width="1.1" fill="none" stroke-linecap="round"/><path d="M14 7L16.2 7.4L15.4 9.4" stroke="#f59a23" stroke-width="0.9" fill="none" stroke-linecap="round" stroke-linejoin="round"/></svg><div class="a n" style="top:412.9px;line-height:20px;font-size:10.9px;letter-spacing:0.35px;color:#fff;left:1269.2px;-webkit-text-stroke:0.38px #fff;">074157727657</div><div class="a" style="left:1397.2px;top:412.2px;width:18.8px;height:21.6px;background:#323d4f;border-radius:5px;"></div><div class="a n" style="top:412.9px;line-height:20px;font-size:10.9px;letter-spacing:0px;color:#fff;left:406.6px;width:2000px;text-align:center;-webkit-text-stroke:0.38px #fff;">-</div><div class="a n" style="top:413px;line-height:20px;font-size:10.9px;letter-spacing:0.08px;color:#8e8e97;left:1525.8px;">N/A</div><div class="a" style="left:1654.6px;top:412.2px;width:86.6px;height:21.6px;background:#323d4f;border-radius:5px;"></div><div class="a n" style="top:412.9px;line-height:20px;font-size:10.9px;letter-spacing:0.09px;color:#fff;left:1661.8px;-webkit-text-stroke:0.38px #fff;">onlineboutique</div><div class="a" style="left:1783px;top:412.2px;width:51.5px;height:21.6px;background:#323d4f;border-radius:5px;"></div><div class="a n" style="top:412.9px;line-height:20px;font-size:10.9px;letter-spacing:0.05px;color:#fff;left:1790.4px;-webkit-text-stroke:0.38px #fff;">product</div><div class="a" style="left:358px;top:482.38px;width:1546px;height:1px;background:#1b1b1f;"></div><div class="a" style="left:364.6px;top:451.78px;width:85.8px;height:21.6px;background:#323d4f;border-radius:5px;"></div><svg viewBox="0 0 14 14" style="position:absolute;left:369.8px;top:456.49px;width:12.6px;height:12.6px;stroke:#fff;fill:none;stroke-width:1.05;stroke-linecap:round"><circle cx="7" cy="7" r="4.3"/><circle cx="7" cy="7" r="1.3"/><path d="M7.00 5.70L7.00 0.60M8.02 6.19L12.00 3.01M8.27 7.29L13.24 8.42M7.56 8.17L9.78 12.77M6.44 8.17L4.22 12.77M5.73 7.29L0.76 8.42M5.98 6.19L2.00 3.01"/></svg><div class="a n" style="top:452.49px;line-height:20px;font-size:10.9px;letter-spacing:-0.11px;color:#fff;left:388.3px;-webkit-text-stroke:0.38px #fff;">Kubernetes</div><div class="a" style="left:493.4px;top:451.78px;width:115px;height:21.6px;background:#323d4f;border-radius:5px;"></div><div class="a n" style="top:452.49px;line-height:20px;font-size:10.9px;letter-spacing:-0.09px;color:#fff;left:500.6px;-webkit-text-stroke:0.38px #fff;">Cluster Role Bindi...</div><div class="a n" style="top:452.49px;line-height:20px;font-size:10.9px;letter-spacing:0.07px;color:#fff;left:622.2px;width:172.6px;overflow:hidden;-webkit-text-stroke:0.38px #fff;">system:controller:volumeattributesclass</div><div class="a" style="left:930.8px;top:454.69px;width:28.8px;height:16.4px;background:#163a29;border-radius:4px;"></div><div class="a n" style="top:452.69px;line-height:20px;font-size:10.8px;letter-spacing:-0.08px;color:#55dc98;left:935.4px;-webkit-text-stroke:0.2px #55dc98;">Live</div><div class="a n" style="top:451.19px;line-height:20px;font-size:10.9px;letter-spacing:-0.02px;color:#fff;left:1059.7px;-webkit-text-stroke:0.38px #fff;">5 months, 20 days</div><svg viewBox="0 0 17 11" style="position:absolute;left:1190.6px;top:457.28px;width:17px;height:11px"><text x="0.9" y="6" font-family="Liberation Sans" font-weight="400" font-size="8.6" fill="#f4f4f5" stroke="#f4f4f5" stroke-width="0.25" letter-spacing="-0.55">aws</text><path d="M0.8 7.6Q8 11.6 15.2 8" stroke="#f59a23" stroke-width="1.1" fill="none" stroke-linecap="round"/><path d="M14 7L16.2 7.4L15.4 9.4" stroke="#f59a23" stroke-width="0.9" fill="none" stroke-linecap="round" stroke-linejoin="round"/></svg><div class="a n" style="top:452.49px;line-height:20px;font-size:10.9px;letter-spacing:0.35px;color:#fff;left:1269.2px;-webkit-text-stroke:0.38px #fff;">074157727657</div><div class="a" style="left:1397.2px;top:451.78px;width:18.8px;height:21.6px;background:#323d4f;border-radius:5px;"></div><div class="a n" style="top:452.49px;line-height:20px;font-size:10.9px;letter-spacing:0px;color:#fff;left:406.6px;width:2000px;text-align:center;-webkit-text-stroke:0.38px #fff;">-</div><div class="a n" style="top:452.58px;line-height:20px;font-size:10.9px;letter-spacing:0.08px;color:#8e8e97;left:1525.8px;">N/A</div><div class="a" style="left:1654.6px;top:451.78px;width:86.6px;height:21.6px;background:#323d4f;border-radius:5px;"></div><div class="a n" style="top:452.49px;line-height:20px;font-size:10.9px;letter-spacing:0.09px;color:#fff;left:1661.8px;-webkit-text-stroke:0.38px #fff;">onlineboutique</div><div class="a" style="left:1783px;top:451.78px;width:51.5px;height:21.6px;background:#323d4f;border-radius:5px;"></div><div class="a n" style="top:452.49px;line-height:20px;font-size:10.9px;letter-spacing:0.05px;color:#fff;left:1790.4px;-webkit-text-stroke:0.38px #fff;">product</div><div class="a" style="left:358px;top:521.97px;width:1546px;height:1px;background:#1b1b1f;"></div><div class="a" style="left:364.6px;top:491.37px;width:85.8px;height:21.6px;background:#323d4f;border-radius:5px;"></div><svg viewBox="0 0 14 14" style="position:absolute;left:369.8px;top:496.07px;width:12.6px;height:12.6px;stroke:#fff;fill:none;stroke-width:1.05;stroke-linecap:round"><circle cx="7" cy="7" r="4.3"/><circle cx="7" cy="7" r="1.3"/><path d="M7.00 5.70L7.00 0.60M8.02 6.19L12.00 3.01M8.27 7.29L13.24 8.42M7.56 8.17L9.78 12.77M6.44 8.17L4.22 12.77M5.73 7.29L0.76 8.42M5.98 6.19L2.00 3.01"/></svg><div class="a n" style="top:492.07px;line-height:20px;font-size:10.9px;letter-spacing:-0.11px;color:#fff;left:388.3px;-webkit-text-stroke:0.38px #fff;">Kubernetes</div><div class="a" style="left:493.4px;top:491.37px;width:115px;height:21.6px;background:#323d4f;border-radius:5px;"></div><div class="a n" style="top:492.07px;line-height:20px;font-size:10.9px;letter-spacing:-0.09px;color:#fff;left:500.6px;-webkit-text-stroke:0.38px #fff;">Cluster Role Bindi...</div><div class="a n" style="top:492.07px;line-height:20px;font-size:10.9px;letter-spacing:0.01px;color:#fff;left:622.2px;width:172.6px;overflow:hidden;-webkit-text-stroke:0.38px #fff;">eks:az-poller</div><div class="a" style="left:930.8px;top:494.27px;width:28.8px;height:16.4px;background:#163a29;border-radius:4px;"></div><div class="a n" style="top:492.27px;line-height:20px;font-size:10.8px;letter-spacing:-0.08px;color:#55dc98;left:935.4px;-webkit-text-stroke:0.2px #55dc98;">Live</div><div class="a n" style="top:490.77px;line-height:20px;font-size:10.9px;letter-spacing:-0.02px;color:#fff;left:1059.7px;-webkit-text-stroke:0.38px #fff;">2 years, 10 months</div><svg viewBox="0 0 17 11" style="position:absolute;left:1190.6px;top:496.87px;width:17px;height:11px"><text x="0.9" y="6" font-family="Liberation Sans" font-weight="400" font-size="8.6" fill="#f4f4f5" stroke="#f4f4f5" stroke-width="0.25" letter-spacing="-0.55">aws</text><path d="M0.8 7.6Q8 11.6 15.2 8" stroke="#f59a23" stroke-width="1.1" fill="none" stroke-linecap="round"/><path d="M14 7L16.2 7.4L15.4 9.4" stroke="#f59a23" stroke-width="0.9" fill="none" stroke-linecap="round" stroke-linejoin="round"/></svg><div class="a n" style="top:492.07px;line-height:20px;font-size:10.9px;letter-spacing:0.35px;color:#fff;left:1269.2px;-webkit-text-stroke:0.38px #fff;">074157727657</div><div class="a" style="left:1397.2px;top:491.37px;width:18.8px;height:21.6px;background:#323d4f;border-radius:5px;"></div><div class="a n" style="top:492.07px;line-height:20px;font-size:10.9px;letter-spacing:0px;color:#fff;left:406.6px;width:2000px;text-align:center;-webkit-text-stroke:0.38px #fff;">-</div><div class="a n" style="top:492.17px;line-height:20px;font-size:10.9px;letter-spacing:0.08px;color:#8e8e97;left:1525.8px;">N/A</div><div class="a" style="left:1654.6px;top:491.37px;width:86.6px;height:21.6px;background:#323d4f;border-radius:5px;"></div><div class="a n" style="top:492.07px;line-height:20px;font-size:10.9px;letter-spacing:0.09px;color:#fff;left:1661.8px;-webkit-text-stroke:0.38px #fff;">onlineboutique</div><div class="a" style="left:1783px;top:491.37px;width:51.5px;height:21.6px;background:#323d4f;border-radius:5px;"></div><div class="a n" style="top:492.07px;line-height:20px;font-size:10.9px;letter-spacing:0.05px;color:#fff;left:1790.4px;-webkit-text-stroke:0.38px #fff;">product</div><div class="a" style="left:358px;top:561.56px;width:1546px;height:1px;background:#1b1b1f;"></div><div class="a" style="left:364.6px;top:530.95px;width:85.8px;height:21.6px;background:#323d4f;border-radius:5px;"></div><svg viewBox="0 0 14 14" style="position:absolute;left:369.8px;top:535.65px;width:12.6px;height:12.6px;stroke:#fff;fill:none;stroke-width:1.05;stroke-linecap:round"><circle cx="7" cy="7" r="4.3"/><circle cx="7" cy="7" r="1.3"/><path d="M7.00 5.70L7.00 0.60M8.02 6.19L12.00 3.01M8.27 7.29L13.24 8.42M7.56 8.17L9.78 12.77M6.44 8.17L4.22 12.77M5.73 7.29L0.76 8.42M5.98 6.19L2.00 3.01"/></svg><div class="a n" style="top:531.65px;line-height:20px;font-size:10.9px;letter-spacing:-0.11px;color:#fff;left:388.3px;-webkit-text-stroke:0.38px #fff;">Kubernetes</div><div class="a" style="left:493.4px;top:530.95px;width:79.2px;height:21.6px;background:#323d4f;border-radius:5px;"></div><div class="a n" style="top:531.65px;line-height:20px;font-size:10.9px;letter-spacing:-0.06px;color:#fff;left:500.6px;-webkit-text-stroke:0.38px #fff;">Cluster Roles</div><div class="a n" style="top:531.65px;line-height:20px;font-size:10.9px;letter-spacing:0.18px;color:#fff;left:622.2px;width:172.6px;overflow:hidden;-webkit-text-stroke:0.38px #fff;">global-operators-admin</div><div class="a" style="left:930.8px;top:533.85px;width:28.8px;height:16.4px;background:#163a29;border-radius:4px;"></div><div class="a n" style="top:531.85px;line-height:20px;font-size:10.8px;letter-spacing:-0.08px;color:#55dc98;left:935.4px;-webkit-text-stroke:0.2px #55dc98;">Live</div><div class="a n" style="top:530.35px;line-height:20px;font-size:10.9px;letter-spacing:-0.06px;color:#fff;left:1059.7px;-webkit-text-stroke:0.38px #fff;">4 years, 5 months</div><svg viewBox="0 0 17 11" style="position:absolute;left:1190.6px;top:536.45px;width:17px;height:11px"><text x="0.9" y="6" font-family="Liberation Sans" font-weight="400" font-size="8.6" fill="#f4f4f5" stroke="#f4f4f5" stroke-width="0.25" letter-spacing="-0.55">aws</text><path d="M0.8 7.6Q8 11.6 15.2 8" stroke="#f59a23" stroke-width="1.1" fill="none" stroke-linecap="round"/><path d="M14 7L16.2 7.4L15.4 9.4" stroke="#f59a23" stroke-width="0.9" fill="none" stroke-linecap="round" stroke-linejoin="round"/></svg><div class="a n" style="top:531.65px;line-height:20px;font-size:10.9px;letter-spacing:0.35px;color:#fff;left:1269.2px;-webkit-text-stroke:0.38px #fff;">074157727657</div><div class="a" style="left:1397.2px;top:530.95px;width:18.8px;height:21.6px;background:#323d4f;border-radius:5px;"></div><div class="a n" style="top:531.65px;line-height:20px;font-size:10.9px;letter-spacing:0px;color:#fff;left:406.6px;width:2000px;text-align:center;-webkit-text-stroke:0.38px #fff;">-</div><div class="a n" style="top:531.75px;line-height:20px;font-size:10.9px;letter-spacing:0.08px;color:#8e8e97;left:1525.8px;">N/A</div><div class="a" style="left:1654.6px;top:530.95px;width:86.6px;height:21.6px;background:#323d4f;border-radius:5px;"></div><div class="a n" style="top:531.65px;line-height:20px;font-size:10.9px;letter-spacing:0.09px;color:#fff;left:1661.8px;-webkit-text-stroke:0.38px #fff;">onlineboutique</div><div class="a" style="left:1783px;top:530.95px;width:51.5px;height:21.6px;background:#323d4f;border-radius:5px;"></div><div class="a n" style="top:531.65px;line-height:20px;font-size:10.9px;letter-spacing:0.05px;color:#fff;left:1790.4px;-webkit-text-stroke:0.38px #fff;">product</div><div class="a" style="left:358px;top:601.14px;width:1546px;height:1px;background:#1b1b1f;"></div><div class="a" style="left:364.6px;top:570.54px;width:85.8px;height:21.6px;background:#323d4f;border-radius:5px;"></div><svg viewBox="0 0 14 14" style="position:absolute;left:369.8px;top:575.24px;width:12.6px;height:12.6px;stroke:#fff;fill:none;stroke-width:1.05;stroke-linecap:round"><circle cx="7" cy="7" r="4.3"/><circle cx="7" cy="7" r="1.3"/><path d="M7.00 5.70L7.00 0.60M8.02 6.19L12.00 3.01M8.27 7.29L13.24 8.42M7.56 8.17L9.78 12.77M6.44 8.17L4.22 12.77M5.73 7.29L0.76 8.42M5.98 6.19L2.00 3.01"/></svg><div class="a n" style="top:571.24px;line-height:20px;font-size:10.9px;letter-spacing:-0.11px;color:#fff;left:388.3px;-webkit-text-stroke:0.38px #fff;">Kubernetes</div><div class="a" style="left:493.4px;top:570.54px;width:115px;height:21.6px;background:#323d4f;border-radius:5px;"></div><div class="a n" style="top:571.24px;line-height:20px;font-size:10.9px;letter-spacing:-0.09px;color:#fff;left:500.6px;-webkit-text-stroke:0.38px #fff;">Cluster Role Bindi...</div><div class="a n" style="top:571.24px;line-height:20px;font-size:10.9px;letter-spacing:0.11px;color:#fff;left:622.2px;width:172.6px;overflow:hidden;-webkit-text-stroke:0.38px #fff;">prometheus-alertmanager</div><div class="a" style="left:930.8px;top:573.44px;width:28.8px;height:16.4px;background:#163a29;border-radius:4px;"></div><div class="a n" style="top:571.44px;line-height:20px;font-size:10.8px;letter-spacing:-0.08px;color:#55dc98;left:935.4px;-webkit-text-stroke:0.2px #55dc98;">Live</div><div class="a n" style="top:569.94px;line-height:20px;font-size:10.9px;letter-spacing:-0.06px;color:#fff;left:1059.7px;-webkit-text-stroke:0.38px #fff;">4 years, 5 months</div><svg viewBox="0 0 17 11" style="position:absolute;left:1190.6px;top:576.04px;width:17px;height:11px"><text x="0.9" y="6" font-family="Liberation Sans" font-weight="400" font-size="8.6" fill="#f4f4f5" stroke="#f4f4f5" stroke-width="0.25" letter-spacing="-0.55">aws</text><path d="M0.8 7.6Q8 11.6 15.2 8" stroke="#f59a23" stroke-width="1.1" fill="none" stroke-linecap="round"/><path d="M14 7L16.2 7.4L15.4 9.4" stroke="#f59a23" stroke-width="0.9" fill="none" stroke-linecap="round" stroke-linejoin="round"/></svg><div class="a n" style="top:571.24px;line-height:20px;font-size:10.9px;letter-spacing:0.35px;color:#fff;left:1269.2px;-webkit-text-stroke:0.38px #fff;">074157727657</div><div class="a" style="left:1397.2px;top:570.54px;width:18.8px;height:21.6px;background:#323d4f;border-radius:5px;"></div><div class="a n" style="top:571.24px;line-height:20px;font-size:10.9px;letter-spacing:0px;color:#fff;left:406.6px;width:2000px;text-align:center;-webkit-text-stroke:0.38px #fff;">-</div><div class="a n" style="top:571.34px;line-height:20px;font-size:10.9px;letter-spacing:0.08px;color:#8e8e97;left:1525.8px;">N/A</div><div class="a" style="left:1654.6px;top:570.54px;width:86.6px;height:21.6px;background:#323d4f;border-radius:5px;"></div><div class="a n" style="top:571.24px;line-height:20px;font-size:10.9px;letter-spacing:0.09px;color:#fff;left:1661.8px;-webkit-text-stroke:0.38px #fff;">onlineboutique</div><div class="a" style="left:1783px;top:570.54px;width:51.5px;height:21.6px;background:#323d4f;border-radius:5px;"></div><div class="a n" style="top:571.24px;line-height:20px;font-size:10.9px;letter-spacing:0.05px;color:#fff;left:1790.4px;-webkit-text-stroke:0.38px #fff;">product</div><div class="a" style="left:358px;top:640.73px;width:1546px;height:1px;background:#1b1b1f;"></div><div class="a" style="left:364.6px;top:610.12px;width:85.8px;height:21.6px;background:#323d4f;border-radius:5px;"></div><svg viewBox="0 0 14 14" style="position:absolute;left:369.8px;top:614.83px;width:12.6px;height:12.6px;stroke:#fff;fill:none;stroke-width:1.05;stroke-linecap:round"><circle cx="7" cy="7" r="4.3"/><circle cx="7" cy="7" r="1.3"/><path d="M7.00 5.70L7.00 0.60M8.02 6.19L12.00 3.01M8.27 7.29L13.24 8.42M7.56 8.17L9.78 12.77M6.44 8.17L4.22 12.77M5.73 7.29L0.76 8.42M5.98 6.19L2.00 3.01"/></svg><div class="a n" style="top:610.82px;line-height:20px;font-size:10.9px;letter-spacing:-0.11px;color:#fff;left:388.3px;-webkit-text-stroke:0.38px #fff;">Kubernetes</div><div class="a" style="left:493.4px;top:610.12px;width:76px;height:21.6px;background:#323d4f;border-radius:5px;"></div><div class="a n" style="top:610.82px;line-height:20px;font-size:10.9px;letter-spacing:-0.21px;color:#fff;left:500.6px;-webkit-text-stroke:0.38px #fff;">Namespaces</div><div class="a n" style="top:610.82px;line-height:20px;font-size:10.9px;letter-spacing:0.07px;color:#fff;left:622.2px;width:172.6px;overflow:hidden;-webkit-text-stroke:0.38px #fff;">kube-node-lease</div><div class="a" style="left:802px;top:613.02px;width:70.6px;height:16.4px;background:#2a2a2e;border-radius:4px;"></div><div class="a n" style="top:610.73px;line-height:20px;font-size:10.7px;letter-spacing:0.11px;color:#a1a1aa;left:806px;">Unmonitored</div><div class="a" style="left:930.8px;top:613.02px;width:37.6px;height:16.4px;background:#163a29;border-radius:4px;"></div><div class="a n" style="top:611.02px;line-height:20px;font-size:10.8px;letter-spacing:0.1px;color:#55dc98;left:934.6px;-webkit-text-stroke:0.2px #55dc98;">Active</div><div class="a n" style="top:609.52px;line-height:20px;font-size:10.9px;letter-spacing:-0.06px;color:#fff;left:1059.7px;-webkit-text-stroke:0.38px #fff;">4 years, 6 months</div><svg viewBox="0 0 17 11" style="position:absolute;left:1190.6px;top:615.62px;width:17px;height:11px"><text x="0.9" y="6" font-family="Liberation Sans" font-weight="400" font-size="8.6" fill="#f4f4f5" stroke="#f4f4f5" stroke-width="0.25" letter-spacing="-0.55">aws</text><path d="M0.8 7.6Q8 11.6 15.2 8" stroke="#f59a23" stroke-width="1.1" fill="none" stroke-linecap="round"/><path d="M14 7L16.2 7.4L15.4 9.4" stroke="#f59a23" stroke-width="0.9" fill="none" stroke-linecap="round" stroke-linejoin="round"/></svg><div class="a n" style="top:610.82px;line-height:20px;font-size:10.9px;letter-spacing:0.35px;color:#fff;left:1269.2px;-webkit-text-stroke:0.38px #fff;">074157727657</div><div class="a" style="left:1397.2px;top:610.12px;width:18.8px;height:21.6px;background:#323d4f;border-radius:5px;"></div><div class="a n" style="top:610.82px;line-height:20px;font-size:10.9px;letter-spacing:0px;color:#fff;left:406.6px;width:2000px;text-align:center;-webkit-text-stroke:0.38px #fff;">-</div><div class="a n" style="top:610.92px;line-height:20px;font-size:10.9px;letter-spacing:0.08px;color:#8e8e97;left:1525.8px;">N/A</div><div class="a" style="left:1654.6px;top:610.12px;width:84px;height:21.6px;background:#323d4f;border-radius:5px;"></div><div class="a n" style="top:610.82px;line-height:20px;font-size:10.9px;letter-spacing:0.11px;color:#fff;left:1661.8px;-webkit-text-stroke:0.38px #fff;">onlineboutiq...</div><div class="a" style="left:1742.3px;top:610.12px;width:27px;height:21.6px;background:#323d4f;border-radius:5px;"></div><div class="a n" style="top:610.82px;line-height:20px;font-size:10.9px;letter-spacing:-0.2px;color:#fff;left:755.8px;width:2000px;text-align:center;-webkit-text-stroke:0.38px #fff;">+1</div><div class="a" style="left:1783px;top:610.12px;width:51.5px;height:21.6px;background:#323d4f;border-radius:5px;"></div><div class="a n" style="top:610.82px;line-height:20px;font-size:10.9px;letter-spacing:0.05px;color:#fff;left:1790.4px;-webkit-text-stroke:0.38px #fff;">product</div><div class="a" style="left:358px;top:680.31px;width:1546px;height:1px;background:#1b1b1f;"></div><div class="a" style="left:364.6px;top:649.71px;width:85.8px;height:21.6px;background:#323d4f;border-radius:5px;"></div><svg viewBox="0 0 14 14" style="position:absolute;left:369.8px;top:654.41px;width:12.6px;height:12.6px;stroke:#fff;fill:none;stroke-width:1.05;stroke-linecap:round"><circle cx="7" cy="7" r="4.3"/><circle cx="7" cy="7" r="1.3"/><path d="M7.00 5.70L7.00 0.60M8.02 6.19L12.00 3.01M8.27 7.29L13.24 8.42M7.56 8.17L9.78 12.77M6.44 8.17L4.22 12.77M5.73 7.29L0.76 8.42M5.98 6.19L2.00 3.01"/></svg><div class="a n" style="top:650.41px;line-height:20px;font-size:10.9px;letter-spacing:-0.11px;color:#fff;left:388.3px;-webkit-text-stroke:0.38px #fff;">Kubernetes</div><div class="a" style="left:493.4px;top:649.71px;width:79.2px;height:21.6px;background:#323d4f;border-radius:5px;"></div><div class="a n" style="top:650.41px;line-height:20px;font-size:10.9px;letter-spacing:-0.06px;color:#fff;left:500.6px;-webkit-text-stroke:0.38px #fff;">Cluster Roles</div><div class="a n" style="top:650.41px;line-height:20px;font-size:10.9px;letter-spacing:0.03px;color:#fff;left:622.2px;width:172.6px;overflow:hidden;-webkit-text-stroke:0.38px #fff;">system:controller:daemon-set-controller</div><div class="a" style="left:930.8px;top:652.61px;width:28.8px;height:16.4px;background:#163a29;border-radius:4px;"></div><div class="a n" style="top:650.61px;line-height:20px;font-size:10.8px;letter-spacing:-0.08px;color:#55dc98;left:935.4px;-webkit-text-stroke:0.2px #55dc98;">Live</div><div class="a n" style="top:649.11px;line-height:20px;font-size:10.9px;letter-spacing:-0.06px;color:#fff;left:1059.7px;-webkit-text-stroke:0.38px #fff;">4 years, 6 months</div><svg viewBox="0 0 17 11" style="position:absolute;left:1190.6px;top:655.21px;width:17px;height:11px"><text x="0.9" y="6" font-family="Liberation Sans" font-weight="400" font-size="8.6" fill="#f4f4f5" stroke="#f4f4f5" stroke-width="0.25" letter-spacing="-0.55">aws</text><path d="M0.8 7.6Q8 11.6 15.2 8" stroke="#f59a23" stroke-width="1.1" fill="none" stroke-linecap="round"/><path d="M14 7L16.2 7.4L15.4 9.4" stroke="#f59a23" stroke-width="0.9" fill="none" stroke-linecap="round" stroke-linejoin="round"/></svg><div class="a n" style="top:650.41px;line-height:20px;font-size:10.9px;letter-spacing:0.35px;color:#fff;left:1269.2px;-webkit-text-stroke:0.38px #fff;">074157727657</div><div class="a" style="left:1397.2px;top:649.71px;width:18.8px;height:21.6px;background:#323d4f;border-radius:5px;"></div><div class="a n" style="top:650.41px;line-height:20px;font-size:10.9px;letter-spacing:0px;color:#fff;left:406.6px;width:2000px;text-align:center;-webkit-text-stroke:0.38px #fff;">-</div><div class="a n" style="top:650.51px;line-height:20px;font-size:10.9px;letter-spacing:0.08px;color:#8e8e97;left:1525.8px;">N/A</div><div class="a" style="left:1654.6px;top:649.71px;width:86.6px;height:21.6px;background:#323d4f;border-radius:5px;"></div><div class="a n" style="top:650.41px;line-height:20px;font-size:10.9px;letter-spacing:0.09px;color:#fff;left:1661.8px;-webkit-text-stroke:0.38px #fff;">onlineboutique</div><div class="a" style="left:1783px;top:649.71px;width:51.5px;height:21.6px;background:#323d4f;border-radius:5px;"></div><div class="a n" style="top:650.41px;line-height:20px;font-size:10.9px;letter-spacing:0.05px;color:#fff;left:1790.4px;-webkit-text-stroke:0.38px #fff;">product</div><div class="a" style="left:358px;top:719.89px;width:1546px;height:1px;background:#1b1b1f;"></div><div class="a" style="left:364.6px;top:689.3px;width:85.8px;height:21.6px;background:#323d4f;border-radius:5px;"></div><svg viewBox="0 0 14 14" style="position:absolute;left:369.8px;top:694px;width:12.6px;height:12.6px;stroke:#fff;fill:none;stroke-width:1.05;stroke-linecap:round"><circle cx="7" cy="7" r="4.3"/><circle cx="7" cy="7" r="1.3"/><path d="M7.00 5.70L7.00 0.60M8.02 6.19L12.00 3.01M8.27 7.29L13.24 8.42M7.56 8.17L9.78 12.77M6.44 8.17L4.22 12.77M5.73 7.29L0.76 8.42M5.98 6.19L2.00 3.01"/></svg><div class="a n" style="top:690px;line-height:20px;font-size:10.9px;letter-spacing:-0.11px;color:#fff;left:388.3px;-webkit-text-stroke:0.38px #fff;">Kubernetes</div><div class="a" style="left:493.4px;top:689.3px;width:115px;height:21.6px;background:#323d4f;border-radius:5px;"></div><div class="a n" style="top:690px;line-height:20px;font-size:10.9px;letter-spacing:-0.09px;color:#fff;left:500.6px;-webkit-text-stroke:0.38px #fff;">Cluster Role Bindi...</div><div class="a n" style="top:690px;line-height:20px;font-size:10.9px;letter-spacing:-0.04px;color:#fff;left:622.2px;width:172.6px;overflow:hidden;-webkit-text-stroke:0.38px #fff;">eks:nodewatcher</div><div class="a" style="left:930.8px;top:692.2px;width:28.8px;height:16.4px;background:#163a29;border-radius:4px;"></div><div class="a n" style="top:690.2px;line-height:20px;font-size:10.8px;letter-spacing:-0.08px;color:#55dc98;left:935.4px;-webkit-text-stroke:0.2px #55dc98;">Live</div><div class="a n" style="top:688.7px;line-height:20px;font-size:10.9px;letter-spacing:-0.06px;color:#fff;left:1059.7px;-webkit-text-stroke:0.38px #fff;">4 years, 6 months</div><svg viewBox="0 0 17 11" style="position:absolute;left:1190.6px;top:694.8px;width:17px;height:11px"><text x="0.9" y="6" font-family="Liberation Sans" font-weight="400" font-size="8.6" fill="#f4f4f5" stroke="#f4f4f5" stroke-width="0.25" letter-spacing="-0.55">aws</text><path d="M0.8 7.6Q8 11.6 15.2 8" stroke="#f59a23" stroke-width="1.1" fill="none" stroke-linecap="round"/><path d="M14 7L16.2 7.4L15.4 9.4" stroke="#f59a23" stroke-width="0.9" fill="none" stroke-linecap="round" stroke-linejoin="round"/></svg><div class="a n" style="top:690px;line-height:20px;font-size:10.9px;letter-spacing:0.35px;color:#fff;left:1269.2px;-webkit-text-stroke:0.38px #fff;">074157727657</div><div class="a" style="left:1397.2px;top:689.3px;width:18.8px;height:21.6px;background:#323d4f;border-radius:5px;"></div><div class="a n" style="top:690px;line-height:20px;font-size:10.9px;letter-spacing:0px;color:#fff;left:406.6px;width:2000px;text-align:center;-webkit-text-stroke:0.38px #fff;">-</div><div class="a n" style="top:690.1px;line-height:20px;font-size:10.9px;letter-spacing:0.08px;color:#8e8e97;left:1525.8px;">N/A</div><div class="a" style="left:1654.6px;top:689.3px;width:86.6px;height:21.6px;background:#323d4f;border-radius:5px;"></div><div class="a n" style="top:690px;line-height:20px;font-size:10.9px;letter-spacing:0.09px;color:#fff;left:1661.8px;-webkit-text-stroke:0.38px #fff;">onlineboutique</div><div class="a" style="left:1783px;top:689.3px;width:51.5px;height:21.6px;background:#323d4f;border-radius:5px;"></div><div class="a n" style="top:690px;line-height:20px;font-size:10.9px;letter-spacing:0.05px;color:#fff;left:1790.4px;-webkit-text-stroke:0.38px #fff;">product</div><div class="a" style="left:358px;top:759.48px;width:1546px;height:1px;background:#1b1b1f;"></div><div class="a" style="left:364.6px;top:728.88px;width:85.8px;height:21.6px;background:#323d4f;border-radius:5px;"></div><svg viewBox="0 0 14 14" style="position:absolute;left:369.8px;top:733.58px;width:12.6px;height:12.6px;stroke:#fff;fill:none;stroke-width:1.05;stroke-linecap:round"><circle cx="7" cy="7" r="4.3"/><circle cx="7" cy="7" r="1.3"/><path d="M7.00 5.70L7.00 0.60M8.02 6.19L12.00 3.01M8.27 7.29L13.24 8.42M7.56 8.17L9.78 12.77M6.44 8.17L4.22 12.77M5.73 7.29L0.76 8.42M5.98 6.19L2.00 3.01"/></svg><div class="a n" style="top:729.58px;line-height:20px;font-size:10.9px;letter-spacing:-0.11px;color:#fff;left:388.3px;-webkit-text-stroke:0.38px #fff;">Kubernetes</div><div class="a" style="left:493.4px;top:728.88px;width:79.2px;height:21.6px;background:#323d4f;border-radius:5px;"></div><div class="a n" style="top:729.58px;line-height:20px;font-size:10.9px;letter-spacing:-0.06px;color:#fff;left:500.6px;-webkit-text-stroke:0.38px #fff;">Cluster Roles</div><div class="a n" style="top:729.58px;line-height:20px;font-size:10.9px;letter-spacing:0.22px;color:#fff;left:622.2px;width:172.6px;overflow:hidden;-webkit-text-stroke:0.38px #fff;">olm-operators-edit</div><div class="a" style="left:930.8px;top:731.78px;width:28.8px;height:16.4px;background:#163a29;border-radius:4px;"></div><div class="a n" style="top:729.78px;line-height:20px;font-size:10.8px;letter-spacing:-0.08px;color:#55dc98;left:935.4px;-webkit-text-stroke:0.2px #55dc98;">Live</div><div class="a n" style="top:728.28px;line-height:20px;font-size:10.9px;letter-spacing:-0.06px;color:#fff;left:1059.7px;-webkit-text-stroke:0.38px #fff;">4 years, 5 months</div><svg viewBox="0 0 17 11" style="position:absolute;left:1190.6px;top:734.38px;width:17px;height:11px"><text x="0.9" y="6" font-family="Liberation Sans" font-weight="400" font-size="8.6" fill="#f4f4f5" stroke="#f4f4f5" stroke-width="0.25" letter-spacing="-0.55">aws</text><path d="M0.8 7.6Q8 11.6 15.2 8" stroke="#f59a23" stroke-width="1.1" fill="none" stroke-linecap="round"/><path d="M14 7L16.2 7.4L15.4 9.4" stroke="#f59a23" stroke-width="0.9" fill="none" stroke-linecap="round" stroke-linejoin="round"/></svg><div class="a n" style="top:729.58px;line-height:20px;font-size:10.9px;letter-spacing:0.35px;color:#fff;left:1269.2px;-webkit-text-stroke:0.38px #fff;">074157727657</div><div class="a" style="left:1397.2px;top:728.88px;width:18.8px;height:21.6px;background:#323d4f;border-radius:5px;"></div><div class="a n" style="top:729.58px;line-height:20px;font-size:10.9px;letter-spacing:0px;color:#fff;left:406.6px;width:2000px;text-align:center;-webkit-text-stroke:0.38px #fff;">-</div><div class="a n" style="top:729.68px;line-height:20px;font-size:10.9px;letter-spacing:0.08px;color:#8e8e97;left:1525.8px;">N/A</div><div class="a" style="left:1654.6px;top:728.88px;width:86.6px;height:21.6px;background:#323d4f;border-radius:5px;"></div><div class="a n" style="top:729.58px;line-height:20px;font-size:10.9px;letter-spacing:0.09px;color:#fff;left:1661.8px;-webkit-text-stroke:0.38px #fff;">onlineboutique</div><div class="a" style="left:1783px;top:728.88px;width:51.5px;height:21.6px;background:#323d4f;border-radius:5px;"></div><div class="a n" style="top:729.58px;line-height:20px;font-size:10.9px;letter-spacing:0.05px;color:#fff;left:1790.4px;-webkit-text-stroke:0.38px #fff;">product</div><div class="a" style="left:358px;top:799.07px;width:1546px;height:1px;background:#1b1b1f;"></div><div class="a" style="left:364.6px;top:768.46px;width:85.8px;height:21.6px;background:#323d4f;border-radius:5px;"></div><svg viewBox="0 0 14 14" style="position:absolute;left:369.8px;top:773.16px;width:12.6px;height:12.6px;stroke:#fff;fill:none;stroke-width:1.05;stroke-linecap:round"><circle cx="7" cy="7" r="4.3"/><circle cx="7" cy="7" r="1.3"/><path d="M7.00 5.70L7.00 0.60M8.02 6.19L12.00 3.01M8.27 7.29L13.24 8.42M7.56 8.17L9.78 12.77M6.44 8.17L4.22 12.77M5.73 7.29L0.76 8.42M5.98 6.19L2.00 3.01"/></svg><div class="a n" style="top:769.16px;line-height:20px;font-size:10.9px;letter-spacing:-0.11px;color:#fff;left:388.3px;-webkit-text-stroke:0.38px #fff;">Kubernetes</div><div class="a" style="left:493.4px;top:768.46px;width:79.2px;height:21.6px;background:#323d4f;border-radius:5px;"></div><div class="a n" style="top:769.16px;line-height:20px;font-size:10.9px;letter-spacing:-0.06px;color:#fff;left:500.6px;-webkit-text-stroke:0.38px #fff;">Cluster Roles</div><div class="a n" style="top:769.16px;line-height:20px;font-size:10.9px;letter-spacing:0.18px;color:#fff;left:622.2px;width:172.6px;overflow:hidden;-webkit-text-stroke:0.38px #fff;">edit</div><div class="a" style="left:930.8px;top:771.36px;width:28.8px;height:16.4px;background:#163a29;border-radius:4px;"></div><div class="a n" style="top:769.36px;line-height:20px;font-size:10.8px;letter-spacing:-0.08px;color:#55dc98;left:935.4px;-webkit-text-stroke:0.2px #55dc98;">Live</div><div class="a n" style="top:767.86px;line-height:20px;font-size:10.9px;letter-spacing:-0.06px;color:#fff;left:1059.7px;-webkit-text-stroke:0.38px #fff;">4 years, 6 months</div><svg viewBox="0 0 17 11" style="position:absolute;left:1190.6px;top:773.96px;width:17px;height:11px"><text x="0.9" y="6" font-family="Liberation Sans" font-weight="400" font-size="8.6" fill="#f4f4f5" stroke="#f4f4f5" stroke-width="0.25" letter-spacing="-0.55">aws</text><path d="M0.8 7.6Q8 11.6 15.2 8" stroke="#f59a23" stroke-width="1.1" fill="none" stroke-linecap="round"/><path d="M14 7L16.2 7.4L15.4 9.4" stroke="#f59a23" stroke-width="0.9" fill="none" stroke-linecap="round" stroke-linejoin="round"/></svg><div class="a n" style="top:769.16px;line-height:20px;font-size:10.9px;letter-spacing:0.35px;color:#fff;left:1269.2px;-webkit-text-stroke:0.38px #fff;">074157727657</div><div class="a" style="left:1397.2px;top:768.46px;width:18.8px;height:21.6px;background:#323d4f;border-radius:5px;"></div><div class="a n" style="top:769.16px;line-height:20px;font-size:10.9px;letter-spacing:0px;color:#fff;left:406.6px;width:2000px;text-align:center;-webkit-text-stroke:0.38px #fff;">-</div><div class="a n" style="top:769.26px;line-height:20px;font-size:10.9px;letter-spacing:0.08px;color:#8e8e97;left:1525.8px;">N/A</div><div class="a" style="left:1654.6px;top:768.46px;width:86.6px;height:21.6px;background:#323d4f;border-radius:5px;"></div><div class="a n" style="top:769.16px;line-height:20px;font-size:10.9px;letter-spacing:0.09px;color:#fff;left:1661.8px;-webkit-text-stroke:0.38px #fff;">onlineboutique</div><div class="a" style="left:1783px;top:768.46px;width:51.5px;height:21.6px;background:#323d4f;border-radius:5px;"></div><div class="a n" style="top:769.16px;line-height:20px;font-size:10.9px;letter-spacing:0.05px;color:#fff;left:1790.4px;-webkit-text-stroke:0.38px #fff;">product</div><div class="a" style="left:358px;top:838.65px;width:1546px;height:1px;background:#1b1b1f;"></div><div class="a" style="left:364.6px;top:808.05px;width:85.8px;height:21.6px;background:#323d4f;border-radius:5px;"></div><svg viewBox="0 0 14 14" style="position:absolute;left:369.8px;top:812.75px;width:12.6px;height:12.6px;stroke:#fff;fill:none;stroke-width:1.05;stroke-linecap:round"><circle cx="7" cy="7" r="4.3"/><circle cx="7" cy="7" r="1.3"/><path d="M7.00 5.70L7.00 0.60M8.02 6.19L12.00 3.01M8.27 7.29L13.24 8.42M7.56 8.17L9.78 12.77M6.44 8.17L4.22 12.77M5.73 7.29L0.76 8.42M5.98 6.19L2.00 3.01"/></svg><div class="a n" style="top:808.75px;line-height:20px;font-size:10.9px;letter-spacing:-0.11px;color:#fff;left:388.3px;-webkit-text-stroke:0.38px #fff;">Kubernetes</div><div class="a" style="left:493.4px;top:808.05px;width:115px;height:21.6px;background:#323d4f;border-radius:5px;"></div><div class="a n" style="top:808.75px;line-height:20px;font-size:10.9px;letter-spacing:-0.09px;color:#fff;left:500.6px;-webkit-text-stroke:0.38px #fff;">Cluster Role Bindi...</div><div class="a n" style="top:808.75px;line-height:20px;font-size:10.9px;letter-spacing:0.06px;color:#fff;left:622.2px;width:172.6px;overflow:hidden;-webkit-text-stroke:0.38px #fff;">system:controller:deployment-controller</div><div class="a" style="left:930.8px;top:810.95px;width:28.8px;height:16.4px;background:#163a29;border-radius:4px;"></div><div class="a n" style="top:808.95px;line-height:20px;font-size:10.8px;letter-spacing:-0.08px;color:#55dc98;left:935.4px;-webkit-text-stroke:0.2px #55dc98;">Live</div><div class="a n" style="top:807.45px;line-height:20px;font-size:10.9px;letter-spacing:-0.06px;color:#fff;left:1059.7px;-webkit-text-stroke:0.38px #fff;">4 years, 6 months</div><svg viewBox="0 0 17 11" style="position:absolute;left:1190.6px;top:813.55px;width:17px;height:11px"><text x="0.9" y="6" font-family="Liberation Sans" font-weight="400" font-size="8.6" fill="#f4f4f5" stroke="#f4f4f5" stroke-width="0.25" letter-spacing="-0.55">aws</text><path d="M0.8 7.6Q8 11.6 15.2 8" stroke="#f59a23" stroke-width="1.1" fill="none" stroke-linecap="round"/><path d="M14 7L16.2 7.4L15.4 9.4" stroke="#f59a23" stroke-width="0.9" fill="none" stroke-linecap="round" stroke-linejoin="round"/></svg><div class="a n" style="top:808.75px;line-height:20px;font-size:10.9px;letter-spacing:0.35px;color:#fff;left:1269.2px;-webkit-text-stroke:0.38px #fff;">074157727657</div><div class="a" style="left:1397.2px;top:808.05px;width:18.8px;height:21.6px;background:#323d4f;border-radius:5px;"></div><div class="a n" style="top:808.75px;line-height:20px;font-size:10.9px;letter-spacing:0px;color:#fff;left:406.6px;width:2000px;text-align:center;-webkit-text-stroke:0.38px #fff;">-</div><div class="a n" style="top:808.85px;line-height:20px;font-size:10.9px;letter-spacing:0.08px;color:#8e8e97;left:1525.8px;">N/A</div><div class="a" style="left:1654.6px;top:808.05px;width:86.6px;height:21.6px;background:#323d4f;border-radius:5px;"></div><div class="a n" style="top:808.75px;line-height:20px;font-size:10.9px;letter-spacing:0.09px;color:#fff;left:1661.8px;-webkit-text-stroke:0.38px #fff;">onlineboutique</div><div class="a" style="left:1783px;top:808.05px;width:51.5px;height:21.6px;background:#323d4f;border-radius:5px;"></div><div class="a n" style="top:808.75px;line-height:20px;font-size:10.9px;letter-spacing:0.05px;color:#fff;left:1790.4px;-webkit-text-stroke:0.38px #fff;">product</div><div class="a" style="left:358px;top:878.24px;width:1546px;height:1px;background:#1b1b1f;"></div><div class="a" style="left:364.6px;top:847.63px;width:85.8px;height:21.6px;background:#323d4f;border-radius:5px;"></div><svg viewBox="0 0 14 14" style="position:absolute;left:369.8px;top:852.34px;width:12.6px;height:12.6px;stroke:#fff;fill:none;stroke-width:1.05;stroke-linecap:round"><circle cx="7" cy="7" r="4.3"/><circle cx="7" cy="7" r="1.3"/><path d="M7.00 5.70L7.00 0.60M8.02 6.19L12.00 3.01M8.27 7.29L13.24 8.42M7.56 8.17L9.78 12.77M6.44 8.17L4.22 12.77M5.73 7.29L0.76 8.42M5.98 6.19L2.00 3.01"/></svg><div class="a n" style="top:848.33px;line-height:20px;font-size:10.9px;letter-spacing:-0.11px;color:#fff;left:388.3px;-webkit-text-stroke:0.38px #fff;">Kubernetes</div><div class="a" style="left:493.4px;top:847.63px;width:79.2px;height:21.6px;background:#323d4f;border-radius:5px;"></div><div class="a n" style="top:848.33px;line-height:20px;font-size:10.9px;letter-spacing:-0.06px;color:#fff;left:500.6px;-webkit-text-stroke:0.38px #fff;">Cluster Roles</div><div class="a n" style="top:848.33px;line-height:20px;font-size:10.9px;letter-spacing:0.14px;color:#fff;left:622.2px;width:172.6px;overflow:hidden;-webkit-text-stroke:0.38px #fff;">system:aggregate-to-edit</div><div class="a" style="left:930.8px;top:850.53px;width:28.8px;height:16.4px;background:#163a29;border-radius:4px;"></div><div class="a n" style="top:848.53px;line-height:20px;font-size:10.8px;letter-spacing:-0.08px;color:#55dc98;left:935.4px;-webkit-text-stroke:0.2px #55dc98;">Live</div><div class="a n" style="top:847.03px;line-height:20px;font-size:10.9px;letter-spacing:-0.06px;color:#fff;left:1059.7px;-webkit-text-stroke:0.38px #fff;">4 years, 6 months</div><svg viewBox="0 0 17 11" style="position:absolute;left:1190.6px;top:853.13px;width:17px;height:11px"><text x="0.9" y="6" font-family="Liberation Sans" font-weight="400" font-size="8.6" fill="#f4f4f5" stroke="#f4f4f5" stroke-width="0.25" letter-spacing="-0.55">aws</text><path d="M0.8 7.6Q8 11.6 15.2 8" stroke="#f59a23" stroke-width="1.1" fill="none" stroke-linecap="round"/><path d="M14 7L16.2 7.4L15.4 9.4" stroke="#f59a23" stroke-width="0.9" fill="none" stroke-linecap="round" stroke-linejoin="round"/></svg><div class="a n" style="top:848.33px;line-height:20px;font-size:10.9px;letter-spacing:0.35px;color:#fff;left:1269.2px;-webkit-text-stroke:0.38px #fff;">074157727657</div><div class="a" style="left:1397.2px;top:847.63px;width:18.8px;height:21.6px;background:#323d4f;border-radius:5px;"></div><div class="a n" style="top:848.33px;line-height:20px;font-size:10.9px;letter-spacing:0px;color:#fff;left:406.6px;width:2000px;text-align:center;-webkit-text-stroke:0.38px #fff;">-</div><div class="a n" style="top:848.43px;line-height:20px;font-size:10.9px;letter-spacing:0.08px;color:#8e8e97;left:1525.8px;">N/A</div><div class="a" style="left:1654.6px;top:847.63px;width:86.6px;height:21.6px;background:#323d4f;border-radius:5px;"></div><div class="a n" style="top:848.33px;line-height:20px;font-size:10.9px;letter-spacing:0.09px;color:#fff;left:1661.8px;-webkit-text-stroke:0.38px #fff;">onlineboutique</div><div class="a" style="left:1783px;top:847.63px;width:51.5px;height:21.6px;background:#323d4f;border-radius:5px;"></div><div class="a n" style="top:848.33px;line-height:20px;font-size:10.9px;letter-spacing:0.05px;color:#fff;left:1790.4px;-webkit-text-stroke:0.38px #fff;">product</div><div class="a" style="left:358px;top:917.82px;width:1546px;height:1px;background:#1b1b1f;"></div><div class="a" style="left:364.6px;top:887.22px;width:85.8px;height:21.6px;background:#323d4f;border-radius:5px;"></div><svg viewBox="0 0 14 14" style="position:absolute;left:369.8px;top:891.92px;width:12.6px;height:12.6px;stroke:#fff;fill:none;stroke-width:1.05;stroke-linecap:round"><circle cx="7" cy="7" r="4.3"/><circle cx="7" cy="7" r="1.3"/><path d="M7.00 5.70L7.00 0.60M8.02 6.19L12.00 3.01M8.27 7.29L13.24 8.42M7.56 8.17L9.78 12.77M6.44 8.17L4.22 12.77M5.73 7.29L0.76 8.42M5.98 6.19L2.00 3.01"/></svg><div class="a n" style="top:887.92px;line-height:20px;font-size:10.9px;letter-spacing:-0.11px;color:#fff;left:388.3px;-webkit-text-stroke:0.38px #fff;">Kubernetes</div><div class="a" style="left:493.4px;top:887.22px;width:115px;height:21.6px;background:#323d4f;border-radius:5px;"></div><div class="a n" style="top:887.92px;line-height:20px;font-size:10.9px;letter-spacing:-0.09px;color:#fff;left:500.6px;-webkit-text-stroke:0.38px #fff;">Cluster Role Bindi...</div><div class="a n" style="top:887.92px;line-height:20px;font-size:10.9px;letter-spacing:0.26px;color:#fff;left:622.2px;width:172.6px;overflow:hidden;-webkit-text-stroke:0.38px #fff;">olm-operator-binding-olm</div><div class="a" style="left:930.8px;top:890.12px;width:28.8px;height:16.4px;background:#163a29;border-radius:4px;"></div><div class="a n" style="top:888.12px;line-height:20px;font-size:10.8px;letter-spacing:-0.08px;color:#55dc98;left:935.4px;-webkit-text-stroke:0.2px #55dc98;">Live</div><div class="a n" style="top:886.62px;line-height:20px;font-size:10.9px;letter-spacing:-0.06px;color:#fff;left:1059.7px;-webkit-text-stroke:0.38px #fff;">4 years, 5 months</div><svg viewBox="0 0 17 11" style="position:absolute;left:1190.6px;top:892.72px;width:17px;height:11px"><text x="0.9" y="6" font-family="Liberation Sans" font-weight="400" font-size="8.6" fill="#f4f4f5" stroke="#f4f4f5" stroke-width="0.25" letter-spacing="-0.55">aws</text><path d="M0.8 7.6Q8 11.6 15.2 8" stroke="#f59a23" stroke-width="1.1" fill="none" stroke-linecap="round"/><path d="M14 7L16.2 7.4L15.4 9.4" stroke="#f59a23" stroke-width="0.9" fill="none" stroke-linecap="round" stroke-linejoin="round"/></svg><div class="a n" style="top:887.92px;line-height:20px;font-size:10.9px;letter-spacing:0.35px;color:#fff;left:1269.2px;-webkit-text-stroke:0.38px #fff;">074157727657</div><div class="a" style="left:1397.2px;top:887.22px;width:18.8px;height:21.6px;background:#323d4f;border-radius:5px;"></div><div class="a n" style="top:887.92px;line-height:20px;font-size:10.9px;letter-spacing:0px;color:#fff;left:406.6px;width:2000px;text-align:center;-webkit-text-stroke:0.38px #fff;">-</div><div class="a n" style="top:888.02px;line-height:20px;font-size:10.9px;letter-spacing:0.08px;color:#8e8e97;left:1525.8px;">N/A</div><div class="a" style="left:1654.6px;top:887.22px;width:86.6px;height:21.6px;background:#323d4f;border-radius:5px;"></div><div class="a n" style="top:887.92px;line-height:20px;font-size:10.9px;letter-spacing:0.09px;color:#fff;left:1661.8px;-webkit-text-stroke:0.38px #fff;">onlineboutique</div><div class="a" style="left:1783px;top:887.22px;width:51.5px;height:21.6px;background:#323d4f;border-radius:5px;"></div><div class="a n" style="top:887.92px;line-height:20px;font-size:10.9px;letter-spacing:0.05px;color:#fff;left:1790.4px;-webkit-text-stroke:0.38px #fff;">product</div><div class="a" style="left:358px;top:957.4px;width:1546px;height:1px;background:#1b1b1f;"></div><div class="a" style="left:364.6px;top:926.81px;width:85.8px;height:21.6px;background:#323d4f;border-radius:5px;"></div><svg viewBox="0 0 14 14" style="position:absolute;left:369.8px;top:931.51px;width:12.6px;height:12.6px;stroke:#fff;fill:none;stroke-width:1.05;stroke-linecap:round"><circle cx="7" cy="7" r="4.3"/><circle cx="7" cy="7" r="1.3"/><path d="M7.00 5.70L7.00 0.60M8.02 6.19L12.00 3.01M8.27 7.29L13.24 8.42M7.56 8.17L9.78 12.77M6.44 8.17L4.22 12.77M5.73 7.29L0.76 8.42M5.98 6.19L2.00 3.01"/></svg><div class="a n" style="top:927.5px;line-height:20px;font-size:10.9px;letter-spacing:-0.11px;color:#fff;left:388.3px;-webkit-text-stroke:0.38px #fff;">Kubernetes</div><div class="a" style="left:493.4px;top:926.81px;width:109.5px;height:21.6px;background:#323d4f;border-radius:5px;"></div><div class="a n" style="top:927.5px;line-height:20px;font-size:10.9px;letter-spacing:0.09px;color:#fff;left:500.6px;-webkit-text-stroke:0.38px #fff;">Persistent Volumes</div><div class="a n" style="top:927.5px;line-height:20px;font-size:10.9px;letter-spacing:0.15px;color:#fff;left:622.2px;width:172.6px;overflow:hidden;-webkit-text-stroke:0.38px #fff;">pvc-2cce4164-044d-4b6d-95bc-53a1</div><div class="a" style="left:930.8px;top:929.71px;width:28.8px;height:16.4px;background:#163a29;border-radius:4px;"></div><div class="a n" style="top:927.71px;line-height:20px;font-size:10.8px;letter-spacing:-0.08px;color:#55dc98;left:935.4px;-webkit-text-stroke:0.2px #55dc98;">Live</div><div class="a n" style="top:926.21px;line-height:20px;font-size:10.9px;letter-spacing:-0.06px;color:#fff;left:1059.7px;-webkit-text-stroke:0.38px #fff;">4 years, 5 months</div><svg viewBox="0 0 17 11" style="position:absolute;left:1190.6px;top:932.31px;width:17px;height:11px"><text x="0.9" y="6" font-family="Liberation Sans" font-weight="400" font-size="8.6" fill="#f4f4f5" stroke="#f4f4f5" stroke-width="0.25" letter-spacing="-0.55">aws</text><path d="M0.8 7.6Q8 11.6 15.2 8" stroke="#f59a23" stroke-width="1.1" fill="none" stroke-linecap="round"/><path d="M14 7L16.2 7.4L15.4 9.4" stroke="#f59a23" stroke-width="0.9" fill="none" stroke-linecap="round" stroke-linejoin="round"/></svg><div class="a n" style="top:927.5px;line-height:20px;font-size:10.9px;letter-spacing:0.35px;color:#fff;left:1269.2px;-webkit-text-stroke:0.38px #fff;">074157727657</div><div class="a" style="left:1397.2px;top:926.81px;width:18.8px;height:21.6px;background:#323d4f;border-radius:5px;"></div><div class="a n" style="top:927.5px;line-height:20px;font-size:10.9px;letter-spacing:0px;color:#fff;left:406.6px;width:2000px;text-align:center;-webkit-text-stroke:0.38px #fff;">-</div><div class="a n" style="top:927.61px;line-height:20px;font-size:10.9px;letter-spacing:0.08px;color:#8e8e97;left:1525.8px;">N/A</div><div class="a" style="left:1654.6px;top:926.81px;width:86.6px;height:21.6px;background:#323d4f;border-radius:5px;"></div><div class="a n" style="top:927.5px;line-height:20px;font-size:10.9px;letter-spacing:0.09px;color:#fff;left:1661.8px;-webkit-text-stroke:0.38px #fff;">onlineboutique</div><div class="a" style="left:1783px;top:926.81px;width:51.5px;height:21.6px;background:#323d4f;border-radius:5px;"></div><div class="a n" style="top:927.5px;line-height:20px;font-size:10.9px;letter-spacing:0.05px;color:#fff;left:1790.4px;-webkit-text-stroke:0.38px #fff;">product</div><div class="a" style="left:358px;top:996.99px;width:1546px;height:1px;background:#1b1b1f;"></div><div class="a" style="left:364.6px;top:966.39px;width:85.8px;height:21.6px;background:#323d4f;border-radius:5px;"></div><svg viewBox="0 0 14 14" style="position:absolute;left:369.8px;top:971.09px;width:12.6px;height:12.6px;stroke:#fff;fill:none;stroke-width:1.05;stroke-linecap:round"><circle cx="7" cy="7" r="4.3"/><circle cx="7" cy="7" r="1.3"/><path d="M7.00 5.70L7.00 0.60M8.02 6.19L12.00 3.01M8.27 7.29L13.24 8.42M7.56 8.17L9.78 12.77M6.44 8.17L4.22 12.77M5.73 7.29L0.76 8.42M5.98 6.19L2.00 3.01"/></svg><div class="a n" style="top:967.09px;line-height:20px;font-size:10.9px;letter-spacing:-0.11px;color:#fff;left:388.3px;-webkit-text-stroke:0.38px #fff;">Kubernetes</div><div class="a" style="left:493.4px;top:966.39px;width:79.2px;height:21.6px;background:#323d4f;border-radius:5px;"></div><div class="a n" style="top:967.09px;line-height:20px;font-size:10.9px;letter-spacing:-0.06px;color:#fff;left:500.6px;-webkit-text-stroke:0.38px #fff;">Cluster Roles</div><div class="a n" style="top:967.09px;line-height:20px;font-size:10.9px;letter-spacing:0.06px;color:#fff;left:622.2px;width:172.6px;overflow:hidden;-webkit-text-stroke:0.38px #fff;">system:controller:service-controller</div><div class="a" style="left:930.8px;top:969.29px;width:28.8px;height:16.4px;background:#163a29;border-radius:4px;"></div><div class="a n" style="top:967.29px;line-height:20px;font-size:10.8px;letter-spacing:-0.08px;color:#55dc98;left:935.4px;-webkit-text-stroke:0.2px #55dc98;">Live</div><div class="a n" style="top:965.79px;line-height:20px;font-size:10.9px;letter-spacing:-0.06px;color:#fff;left:1059.7px;-webkit-text-stroke:0.38px #fff;">4 years, 6 months</div><svg viewBox="0 0 17 11" style="position:absolute;left:1190.6px;top:971.89px;width:17px;height:11px"><text x="0.9" y="6" font-family="Liberation Sans" font-weight="400" font-size="8.6" fill="#f4f4f5" stroke="#f4f4f5" stroke-width="0.25" letter-spacing="-0.55">aws</text><path d="M0.8 7.6Q8 11.6 15.2 8" stroke="#f59a23" stroke-width="1.1" fill="none" stroke-linecap="round"/><path d="M14 7L16.2 7.4L15.4 9.4" stroke="#f59a23" stroke-width="0.9" fill="none" stroke-linecap="round" stroke-linejoin="round"/></svg><div class="a n" style="top:967.09px;line-height:20px;font-size:10.9px;letter-spacing:0.35px;color:#fff;left:1269.2px;-webkit-text-stroke:0.38px #fff;">074157727657</div><div class="a" style="left:1397.2px;top:966.39px;width:18.8px;height:21.6px;background:#323d4f;border-radius:5px;"></div><div class="a n" style="top:967.09px;line-height:20px;font-size:10.9px;letter-spacing:0px;color:#fff;left:406.6px;width:2000px;text-align:center;-webkit-text-stroke:0.38px #fff;">-</div><div class="a n" style="top:967.19px;line-height:20px;font-size:10.9px;letter-spacing:0.08px;color:#8e8e97;left:1525.8px;">N/A</div><div class="a" style="left:1654.6px;top:966.39px;width:86.6px;height:21.6px;background:#323d4f;border-radius:5px;"></div><div class="a n" style="top:967.09px;line-height:20px;font-size:10.9px;letter-spacing:0.09px;color:#fff;left:1661.8px;-webkit-text-stroke:0.38px #fff;">onlineboutique</div><div class="a" style="left:1783px;top:966.39px;width:51.5px;height:21.6px;background:#323d4f;border-radius:5px;"></div><div class="a n" style="top:967.09px;line-height:20px;font-size:10.9px;letter-spacing:0.05px;color:#fff;left:1790.4px;-webkit-text-stroke:0.38px #fff;">product</div><div class="a" style="left:358px;top:1036.58px;width:1546px;height:1px;background:#1b1b1f;"></div><div class="a" style="left:364.6px;top:1005.97px;width:85.8px;height:21.6px;background:#323d4f;border-radius:5px;"></div><svg viewBox="0 0 14 14" style="position:absolute;left:369.8px;top:1010.67px;width:12.6px;height:12.6px;stroke:#fff;fill:none;stroke-width:1.05;stroke-linecap:round"><circle cx="7" cy="7" r="4.3"/><circle cx="7" cy="7" r="1.3"/><path d="M7.00 5.70L7.00 0.60M8.02 6.19L12.00 3.01M8.27 7.29L13.24 8.42M7.56 8.17L9.78 12.77M6.44 8.17L4.22 12.77M5.73 7.29L0.76 8.42M5.98 6.19L2.00 3.01"/></svg><div class="a n" style="top:1006.67px;line-height:20px;font-size:10.9px;letter-spacing:-0.11px;color:#fff;left:388.3px;-webkit-text-stroke:0.38px #fff;">Kubernetes</div><div class="a" style="left:493.4px;top:1005.97px;width:115px;height:21.6px;background:#323d4f;border-radius:5px;"></div><div class="a n" style="top:1006.67px;line-height:20px;font-size:10.9px;letter-spacing:-0.09px;color:#fff;left:500.6px;-webkit-text-stroke:0.38px #fff;">Cluster Role Bindi...</div><div class="a n" style="top:1006.67px;line-height:20px;font-size:10.9px;letter-spacing:0.12px;color:#fff;left:622.2px;width:172.6px;overflow:hidden;-webkit-text-stroke:0.38px #fff;">aws-node</div><div class="a" style="left:930.8px;top:1008.87px;width:28.8px;height:16.4px;background:#163a29;border-radius:4px;"></div><div class="a n" style="top:1006.87px;line-height:20px;font-size:10.8px;letter-spacing:-0.08px;color:#55dc98;left:935.4px;-webkit-text-stroke:0.2px #55dc98;">Live</div><div class="a n" style="top:1005.37px;line-height:20px;font-size:10.9px;letter-spacing:-0.04px;color:#fff;left:1059.7px;-webkit-text-stroke:0.38px #fff;">1 year, 2 months</div><svg viewBox="0 0 17 11" style="position:absolute;left:1190.6px;top:1011.47px;width:17px;height:11px"><text x="0.9" y="6" font-family="Liberation Sans" font-weight="400" font-size="8.6" fill="#f4f4f5" stroke="#f4f4f5" stroke-width="0.25" letter-spacing="-0.55">aws</text><path d="M0.8 7.6Q8 11.6 15.2 8" stroke="#f59a23" stroke-width="1.1" fill="none" stroke-linecap="round"/><path d="M14 7L16.2 7.4L15.4 9.4" stroke="#f59a23" stroke-width="0.9" fill="none" stroke-linecap="round" stroke-linejoin="round"/></svg><div class="a n" style="top:1006.67px;line-height:20px;font-size:10.9px;letter-spacing:0.35px;color:#fff;left:1269.2px;-webkit-text-stroke:0.38px #fff;">074157727657</div><div class="a" style="left:1397.2px;top:1005.97px;width:18.8px;height:21.6px;background:#323d4f;border-radius:5px;"></div><div class="a n" style="top:1006.67px;line-height:20px;font-size:10.9px;letter-spacing:0px;color:#fff;left:406.6px;width:2000px;text-align:center;-webkit-text-stroke:0.38px #fff;">-</div><div class="a n" style="top:1006.77px;line-height:20px;font-size:10.9px;letter-spacing:0.08px;color:#8e8e97;left:1525.8px;">N/A</div><div class="a" style="left:1654.6px;top:1005.97px;width:86.6px;height:21.6px;background:#323d4f;border-radius:5px;"></div><div class="a n" style="top:1006.67px;line-height:20px;font-size:10.9px;letter-spacing:0.09px;color:#fff;left:1661.8px;-webkit-text-stroke:0.38px #fff;">onlineboutique</div><div class="a" style="left:1783px;top:1005.97px;width:51.5px;height:21.6px;background:#323d4f;border-radius:5px;"></div><div class="a n" style="top:1006.67px;line-height:20px;font-size:10.9px;letter-spacing:0.05px;color:#fff;left:1790.4px;-webkit-text-stroke:0.38px #fff;">product</div><div class="a" style="left:358px;top:1045.7px;width:1546px;height:1px;background:#1b1b1f;"></div><div class="a n" style="top:1054.1px;line-height:20px;font-size:10.9px;letter-spacing:0.08px;color:#d4d4d8;left:1687.4px;-webkit-text-stroke:0.4px #d4d4d8;">1 – 100 of 586</div><svg class="a" viewBox="0 0 10 10" style="left:1771.3px;top:1059.2px;width:10px;height:10px;stroke:#4b4b53;fill:none;stroke-width:1.1;stroke-linecap:round;stroke-linejoin:round;"><path d="M1.4 1V9M8.4 1.2L4.4 5L8.4 8.8"/></svg><svg class="a" viewBox="0 0 10 10" style="left:1787.6px;top:1059.2px;width:10px;height:10px;stroke:#4b4b53;fill:none;stroke-width:1.1;stroke-linecap:round;stroke-linejoin:round;"><path d="M6.8 1.2L2.8 5L6.8 8.8"/></svg><svg class="a" viewBox="0 0 10 10" style="left:1805px;top:1059.2px;width:10px;height:10px;stroke:#d4d4d8;fill:none;stroke-width:1.1;stroke-linecap:round;stroke-linejoin:round;"><path d="M3.2 1.2L7.2 5L3.2 8.8"/></svg><svg class="a" viewBox="0 0 10 10" style="left:1820.2px;top:1059.2px;width:10px;height:10px;stroke:#d4d4d8;fill:none;stroke-width:1.1;stroke-linecap:round;stroke-linejoin:round;"><path d="M8.6 1V9M1.6 1.2L5.6 5L1.6 8.8"/></svg><div class="a" style="left:1858.8px;top:1028.7px;width:42.7px;height:42.8px;background:#059c4f;border-radius:22px;"></div><svg class="a" viewBox="0 0 20 22" preserveAspectRatio="none" style="left:1871px;top:1039.6px;width:18.5px;height:21.8px"><path d="M2.4 0.4H17.6Q19.6 0.4 19.6 2.4V21.6L14.6 19.4H2.4Q0.4 19.4 0.4 17.4V2.4Q0.4 0.4 2.4 0.4Z" fill="#fff"/><path d="M2.6 14Q10 18.2 17.2 13.6" stroke="#0b9a50" stroke-width="1.3" fill="none" stroke-linecap="round"/></svg>
</div></body></html>
